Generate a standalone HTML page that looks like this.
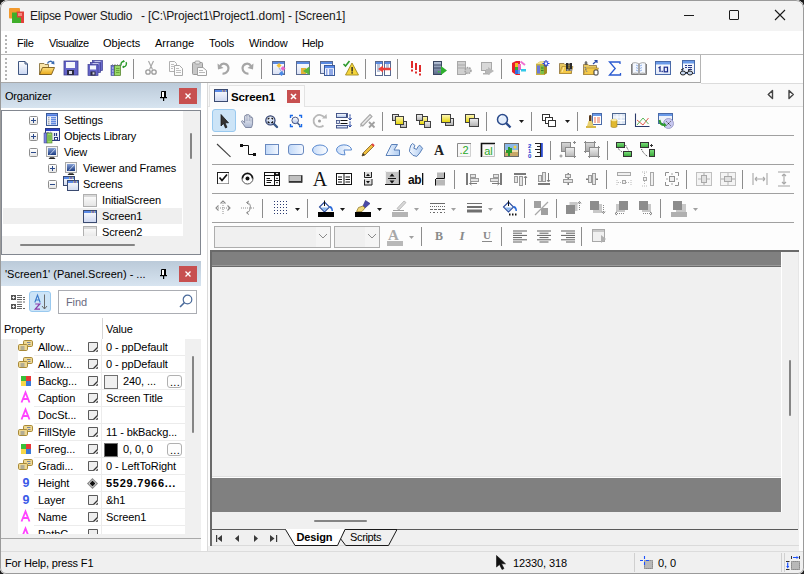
<!DOCTYPE html>
<html><head><meta charset="utf-8">
<style>
*{box-sizing:border-box;margin:0;padding:0}
html,body{width:804px;height:574px;overflow:hidden;background:#1c1c1c}
body{font-family:"Liberation Sans",sans-serif;font-size:11px;color:#000;position:relative}
.a{position:absolute}
svg.a{overflow:visible}
.t{position:absolute;white-space:nowrap;line-height:1}
#win{position:absolute;left:0;top:0;width:804px;height:574px;background:#f0f0f0;border-radius:8px 8px 6px 6px;overflow:hidden}
.mn{position:absolute;top:38px;white-space:nowrap;line-height:1;font-size:11px;letter-spacing:-0.45px;color:#000}
.tr{position:absolute;white-space:nowrap;line-height:1;font-size:11px;letter-spacing:-0.12px;color:#000}
.pr{position:absolute;white-space:nowrap;line-height:1;font-size:11px;letter-spacing:-0.1px;color:#000}
</style></head><body>
<div id="win">
<div class="a" style="left:0px;top:0px;width:804px;height:31px;background:#f3f3f3;"></div>
<svg class="a" style="left:9px;top:8px" width="15" height="15" viewBox="0 0 15 15"><rect x="0" y="0" width="11" height="10.5" rx="1" fill="#f29a2e"/><rect x="7.5" y="3.5" width="7.5" height="11.5" fill="#e2403a"/><path d="M3 4.5H8V9.5H12V15H3Z" fill="#3fae2a"/><path d="M9 5H13V8H9Z" fill="#f28a80"/></svg>
<div class="t" style="left:30px;top:10px;font-size:12px;letter-spacing:-0.28px;color:#1a1a1a">Elipse Power Studio</div>
<div class="t" style="left:141px;top:10px;font-size:12px;letter-spacing:-0.13px;color:#1a1a1a">- [C:\Project1\Project1.dom] - [Screen1]</div>
<div class="a" style="left:684px;top:15px;width:10px;height:1px;background:#1a1a1a;"></div>
<div class="a" style="left:729px;top:10px;width:10px;height:10px;background:transparent;border:1px solid #1a1a1a;border-radius:1px"></div>
<svg class="a" style="left:774px;top:9px" width="12" height="12" viewBox="0 0 12 12"><path d="M1 1L11 11M11 1L1 11" stroke="#1a1a1a" stroke-width="1.1"/></svg>
<div class="a" style="left:0px;top:31px;width:804px;height:23px;background:#fff;"></div>
<div class="a" style="left:0px;top:54px;width:804px;height:1px;background:#b8b8b8;"></div>
<div class="a" style="left:5px;top:35px;width:2px;height:2px;background:#b4b4b4;"></div>
<div class="a" style="left:5px;top:39px;width:2px;height:2px;background:#b4b4b4;"></div>
<div class="a" style="left:5px;top:43px;width:2px;height:2px;background:#b4b4b4;"></div>
<div class="a" style="left:5px;top:47px;width:2px;height:2px;background:#b4b4b4;"></div>
<div class="a" style="left:5px;top:51px;width:2px;height:2px;background:#b4b4b4;"></div>
<div class="mn" style="left:17px;top:38px;letter-spacing:-0.3px">File</div>
<div class="mn" style="left:49px;top:38px;letter-spacing:-0.45px">Visualize</div>
<div class="mn" style="left:103px;top:38px;letter-spacing:0px">Objects</div>
<div class="mn" style="left:155px;top:38px;letter-spacing:0px">Arrange</div>
<div class="mn" style="left:209px;top:38px;letter-spacing:-0.1px">Tools</div>
<div class="mn" style="left:249px;top:38px;letter-spacing:-0.1px">Window</div>
<div class="mn" style="left:302px;top:38px;letter-spacing:-0.35px">Help</div>
<div class="a" style="left:0px;top:55px;width:804px;height:28px;background:#fff;"></div>
<div class="a" style="left:0px;top:55px;width:701px;height:28px;background:#fdfdfd;border-right:1px solid #b4b4b4;border-bottom:1px solid #a8a8a8"></div>
<div class="a" style="left:5px;top:58px;width:2px;height:2px;background:#b4b4b4;"></div>
<div class="a" style="left:5px;top:62px;width:2px;height:2px;background:#b4b4b4;"></div>
<div class="a" style="left:5px;top:66px;width:2px;height:2px;background:#b4b4b4;"></div>
<div class="a" style="left:5px;top:70px;width:2px;height:2px;background:#b4b4b4;"></div>
<div class="a" style="left:5px;top:74px;width:2px;height:2px;background:#b4b4b4;"></div>
<div class="a" style="left:5px;top:78px;width:2px;height:2px;background:#b4b4b4;"></div>
<div class="a" style="left:133px;top:59px;width:1px;height:20px;background:#8c8c8c;"></div>
<div class="a" style="left:261px;top:59px;width:1px;height:20px;background:#8c8c8c;"></div>
<div class="a" style="left:365px;top:59px;width:1px;height:20px;background:#8c8c8c;"></div>
<div class="a" style="left:397px;top:59px;width:1px;height:20px;background:#8c8c8c;"></div>
<div class="a" style="left:501px;top:59px;width:1px;height:20px;background:#8c8c8c;"></div>
<svg class="a" style="left:15px;top:60px" width="16" height="16" viewBox="0 0 16 16"><defs><linearGradient id="gnew" x1="0" y1="0" x2="0" y2="1"><stop offset="0" stop-color="#ffffff"/><stop offset="1" stop-color="#c9d6f2"/></linearGradient></defs><path d="M3.5 1.5H10L12.5 4V14.5H3.5Z" fill="url(#gnew)" stroke="#3f5680" stroke-width="1"/><path d="M10 1.5V4H12.5" fill="none" stroke="#3f5680" stroke-width="1"/></svg>
<svg class="a" style="left:39px;top:60px" width="16" height="16" viewBox="0 0 16 16"><defs><linearGradient id="gopf" x1="0" y1="0" x2="0" y2="1"><stop offset="0" stop-color="#fce080"/><stop offset="1" stop-color="#e8a818"/></linearGradient></defs><path d="M0.5 3.5H5L6 4.5H9.5V14.5H0.5Z" fill="#f8e4a8" stroke="#8a7440" stroke-width="0.9"/><path d="M0.5 14.5L3.5 7.5H15.5L12.5 14.5Z" fill="url(#gopf)" stroke="#7a5a18" stroke-width="0.9"/><path d="M8.5 3.5C9.5 1 12.5 0.5 13.8 2.8" fill="none" stroke="#3a6ab0" stroke-width="1.4"/><path d="M12 3.5L15.5 4.5L15 0.8Z" fill="#3a6ab0"/></svg>
<svg class="a" style="left:63px;top:60px" width="16" height="16" viewBox="0 0 16 16"><rect x="1" y="1" width="14" height="14" fill="#6464c8" stroke="#3c3c90" stroke-width="0.8"/><rect x="3" y="2" width="9" height="6" fill="#f4f6fc"/><rect x="4" y="10" width="7" height="5" fill="#2a2a40"/><rect x="6" y="11" width="3" height="3" fill="#d8d8e8"/></svg>
<svg class="a" style="left:87px;top:60px" width="16" height="16" viewBox="0 0 16 16"><rect x="5.5" y="0.5" width="10" height="10" fill="#6a6acc" stroke="#3c3c90" stroke-width="0.7"/><rect x="7.5" y="1.3" width="6" height="1.5" fill="#e8ecfa"/><rect x="3.5" y="2.5" width="10" height="10" fill="#6a6acc" stroke="#3c3c90" stroke-width="0.7"/><rect x="5.5" y="3.3" width="6" height="1.5" fill="#e8ecfa"/><rect x="1" y="4.5" width="10" height="11" fill="#6464c8" stroke="#3c3c90" stroke-width="0.7"/><rect x="3" y="5.5" width="6" height="4" fill="#f4f6fc"/><rect x="3.5" y="11.5" width="5" height="4" fill="#2a2a40"/><rect x="5.5" y="12.3" width="2" height="2.2" fill="#d0d0e0"/></svg>
<svg class="a" style="left:111px;top:60px" width="16" height="16" viewBox="0 0 16 16"><rect x="0" y="5.5" width="3.5" height="10" fill="#6a74d0" stroke="#3a4490" stroke-width="0.6"/><rect x="1" y="7.5" width="1.5" height="1" fill="#dde"/><rect x="1" y="10.5" width="1.5" height="1" fill="#dde"/><rect x="1" y="13.5" width="1.5" height="1" fill="#dde"/><rect x="3.5" y="5.5" width="6" height="10" fill="#98d868" stroke="#4a7a20" stroke-width="0.7"/><path d="M5 8.5H8.5M5 10.5H8.5M5 12.5H8.5" stroke="#5a9a30" stroke-width="0.8"/><path d="M0.5 5.5Q1.5 3.8 2.5 5.5M3 5.5Q4 3.8 5 5.5M5.5 5.5Q6.5 3.8 7.5 5.5M8 5.5Q9 3.8 10 5.5" stroke="#505070" stroke-width="0.7" fill="none"/><path d="M10.2 5.5A3.2 3.2 0 0 1 12.5 1.2" stroke="#2a9a2a" stroke-width="1.4" fill="none"/><path d="M12 0L14.2 1.2L12 2.6Z" fill="#2a9a2a"/><path d="M15 2.2A3.2 3.2 0 0 1 12.5 7" stroke="#2a9a2a" stroke-width="1.4" fill="none"/><path d="M13 5.6L10.8 6.9L13 8.3Z" fill="#2a9a2a"/></svg>
<svg class="a" style="left:143px;top:60px" width="16" height="16" viewBox="0 0 16 16"><path d="M5.5 1L9.5 9.5M10.5 1L6.5 9.5" stroke="#a8a8a8" stroke-width="1.2"/><circle cx="5" cy="12" r="2.2" fill="none" stroke="#9a9a9a" stroke-width="1.3"/><circle cx="11" cy="12" r="2.2" fill="none" stroke="#9a9a9a" stroke-width="1.3"/></svg>
<svg class="a" style="left:168px;top:60px" width="16" height="16" viewBox="0 0 16 16"><path d="M1.5 1.5H6.5L8.5 3.5V11.5H1.5Z" fill="#fcfcfc" stroke="#b0b0b0"/><path d="M6.5 5.5H11.5L14.5 8.5V15.5H6.5Z" fill="#fcfcfc" stroke="#a8a8a8"/><path d="M3 4.5H6M3 6.5H7M3 8.5H5M8 8.5H11M8 10.5H13M8 12.5H13" stroke="#b8b8b8" stroke-width="0.9"/></svg>
<svg class="a" style="left:191px;top:60px" width="16" height="16" viewBox="0 0 16 16"><rect x="1.5" y="2.5" width="10" height="12" rx="1" fill="#c8c8c8" stroke="#989898"/><rect x="4" y="1" width="5" height="3" rx="1" fill="#e8e8e8" stroke="#989898" stroke-width="0.8"/><path d="M6.5 7.5H12L15.5 10.5V15.5H6.5Z" fill="#fcfcfc" stroke="#a0a0a0"/><path d="M8 10.5H12M8 12.5H14" stroke="#b0b0b0" stroke-width="0.9"/></svg>
<svg class="a" style="left:216px;top:60px" width="16" height="16" viewBox="0 0 16 16"><path d="M4 6C6 2.5 12 3 12.5 8C12.5 12 9 14 6.5 13.5" fill="none" stroke="#a6a6a6" stroke-width="2.2"/><path d="M1.5 3.5L2 9.5L7.5 8Z" fill="#a6a6a6"/></svg>
<svg class="a" style="left:239px;top:60px" width="16" height="16" viewBox="0 0 16 16"><path d="M12 6C10 2.5 4 3 3.5 8C3.5 12 7 14 9.5 13.5" fill="none" stroke="#a6a6a6" stroke-width="2.2"/><path d="M14.5 3.5L14 9.5L8.5 8Z" fill="#a6a6a6"/></svg>
<svg class="a" style="left:271px;top:60px" width="16" height="16" viewBox="0 0 16 16"><defs><linearGradient id="gwd" x1="0" y1="0" x2="0" y2="1"><stop offset="0" stop-color="#fff"/><stop offset="1" stop-color="#d8e0f4"/></linearGradient></defs><rect x="1.5" y="1.5" width="12" height="13" fill="url(#gwd)" stroke="#5a6a90" stroke-width="1"/><rect x="2" y="2" width="11" height="2" fill="#5a8ae0"/><path d="M8 3L10.5 5.5L8 8L5.5 5.5Z" fill="#f4c23a"/><path d="M12 6L14.5 8.5L12 11L9.5 8.5Z" fill="#e86ac8"/><path d="M10.5 11L13 13.5L10.5 16L8 13.5Z" fill="#4a8ae8"/><path d="M8 8L10 11M12 11L11 12" stroke="#6080c0" stroke-width="0.6"/></svg>
<svg class="a" style="left:295px;top:60px" width="16" height="16" viewBox="0 0 16 16"><defs><linearGradient id="gwa" x1="0" y1="0" x2="0" y2="1"><stop offset="0" stop-color="#fff"/><stop offset="1" stop-color="#d8e0f4"/></linearGradient></defs><rect x="1.5" y="1.5" width="13" height="13" fill="url(#gwa)" stroke="#5a6a90" stroke-width="1"/><rect x="2" y="2" width="12" height="2" fill="#5a8ae0"/><rect x="6" y="8" width="5" height="6" fill="#e2b23a"/><path d="M8 11L14.5 6.5V15Z" fill="#58b83a"/></svg>
<svg class="a" style="left:319px;top:60px" width="16" height="16" viewBox="0 0 16 16"><defs><linearGradient id="gwt" x1="0" y1="0" x2="0" y2="1"><stop offset="0" stop-color="#fff"/><stop offset="1" stop-color="#d8e0f4"/></linearGradient></defs><rect x="1.5" y="1.5" width="12" height="12" fill="url(#gwt)" stroke="#5a6a90" stroke-width="1"/><rect x="2" y="2" width="11" height="2" fill="#5a8ae0"/><rect x="5.5" y="5.5" width="10" height="10" fill="#f4f6fc" stroke="#3a5a9a"/><rect x="6" y="6" width="9" height="2.2" fill="#5a8ae8"/><path d="M7 10H8.5M10 10H14M7 12H8.5M10 12H14M7 14H8.5M10 14H14" stroke="#2a5ad0" stroke-width="1"/></svg>
<svg class="a" style="left:343px;top:60px" width="16" height="16" viewBox="0 0 16 16"><path d="M0.5 4L2.5 6L6.5 1" fill="none" stroke="#2e9a2e" stroke-width="1.6"/><path d="M9 3L15.5 15H2.5Z" fill="#f4d43a" stroke="#a08a20" stroke-width="0.9"/><rect x="8.4" y="7" width="1.4" height="4.5" fill="#222"/><rect x="8.4" y="12.2" width="1.4" height="1.4" fill="#222"/></svg>
<svg class="a" style="left:375px;top:60px" width="16" height="16" viewBox="0 0 16 16"><rect x="0.5" y="1.5" width="7" height="14" fill="#fff" stroke="#5a6a90" stroke-width="1"/><rect x="1" y="2" width="6" height="2" fill="#5a8ae0"/><rect x="9.5" y="1.5" width="6" height="14" fill="#fff" stroke="#5a6a90" stroke-width="1"/><rect x="10" y="2" width="5" height="2" fill="#5a8ae0"/><path d="M2 5H5M2 7H5M2 9H5M2 11H5M11 5H14M11 7H14" stroke="#3a5a9a" stroke-width="0.7"/><path d="M3 9L8 5.5V7.8H16V10.2H8V12.5Z" fill="#e8403a"/></svg>
<svg class="a" style="left:408px;top:60px" width="16" height="16" viewBox="0 0 16 16"><rect x="3" y="1" width="2" height="7" fill="#e02a2a"/><rect x="3" y="9.5" width="2" height="2" fill="#e02a2a"/><rect x="7" y="3" width="2" height="7" fill="#e02a2a"/><rect x="7" y="11.5" width="2" height="2" fill="#e02a2a"/><rect x="11" y="5" width="2" height="7" fill="#e02a2a"/><rect x="11" y="13.5" width="2" height="2" fill="#e02a2a"/></svg>
<svg class="a" style="left:432px;top:60px" width="16" height="16" viewBox="0 0 16 16"><defs><linearGradient id="gsp" x1="0" y1="0" x2="0" y2="1"><stop offset="0" stop-color="#b8c4d8"/><stop offset="1" stop-color="#5a6a88"/></linearGradient></defs><rect x="1.5" y="1.5" width="8" height="13" fill="url(#gsp)" stroke="#3a4660"/><path d="M2 5H9M2 8H9" stroke="#2a3450" stroke-width="0.8"/><rect x="6" y="11" width="1.5" height="1.5" fill="#3ac83a"/><path d="M9 6L15 10.5L9 15Z" fill="#2eb02e"/></svg>
<svg class="a" style="left:456px;top:60px" width="16" height="16" viewBox="0 0 16 16"><rect x="1.5" y="1.5" width="8" height="13" fill="#d0d0d0" stroke="#a8a8a8"/><path d="M2 5H9M2 8H9" stroke="#a0a0a0" stroke-width="0.8"/><circle cx="12" cy="10.5" r="3" fill="#c8c8c8" stroke="#a0a0a0" stroke-width="1.5" stroke-dasharray="1.5 1"/></svg>
<svg class="a" style="left:480px;top:60px" width="16" height="16" viewBox="0 0 16 16"><rect x="1.5" y="2.5" width="10" height="8" fill="#d8d8d8" stroke="#a8a8a8"/><rect x="5" y="11" width="3" height="2" fill="#b0b0b0"/><rect x="3" y="13" width="7" height="1.5" fill="#b0b0b0"/><path d="M8 7L14 11L8 15Z" fill="#b8b8b8"/><rect x="6" y="9" width="3" height="4" fill="#b8b8b8"/></svg>
<svg class="a" style="left:511px;top:60px" width="16" height="16" viewBox="0 0 16 16"><path d="M1 3L5 1H9L9 15L5 15L1 12Z" fill="#e8202a"/><rect x="4" y="3" width="3" height="4" fill="#f4c020"/><rect x="7" y="4" width="3" height="3" fill="#f070c0"/><rect x="4" y="7" width="3" height="3" fill="#30b030"/><rect x="7" y="7" width="3" height="3" fill="#e860c8"/><rect x="4" y="10" width="3" height="4" fill="#3070e0"/><rect x="7" y="10" width="2" height="4" fill="#5aa0f0"/><path d="M9.5 1.5L14 5" stroke="#f070d0" stroke-width="2"/><rect x="10" y="9" width="5" height="2.5" fill="#30c8e8"/></svg>
<svg class="a" style="left:535px;top:60px" width="16" height="16" viewBox="0 0 16 16"><path d="M1 4L5 1.5H12L12 13L9 15H1Z" fill="#c8b040"/><path d="M1 4L5 1.5H12L9 4Z" fill="#f0e090"/><path d="M9 4L12 1.5V13L9 15Z" fill="#a08a20"/><rect x="2" y="5.5" width="3" height="8" fill="#6a78d8"/><rect x="5.5" y="5.5" width="3.5" height="8.5" fill="#78c048"/><path d="M6 8H8.5M6 10.5H8.5" stroke="#3a6a20" stroke-width="0.8"/><path d="M11 0V7M7.5 3.5H14.5M8.8 1.3L13.2 5.7M13.2 1.3L8.8 5.7" stroke="#1a3ae8" stroke-width="1.1"/><circle cx="11" cy="3.5" r="1.2" fill="#fff"/></svg>
<svg class="a" style="left:559px;top:60px" width="16" height="16" viewBox="0 0 16 16"><path d="M0.5 3.5H5L6 4.5H12.5V13.5H0.5Z" fill="#e8c860" stroke="#8a7040" stroke-width="0.8"/><path d="M0.5 13.5L3 6.5H14L12 13.5Z" fill="#f4c848" stroke="#a08030" stroke-width="0.6"/><path d="M3 12L5 7" stroke="#fff0c0" stroke-width="0.8"/><path d="M7 3H9.5V8.5H10.5V3H13V11H10.5V9.5H9.5V11H7Z" fill="#2a2a2a"/><rect x="7.5" y="9" width="2" height="2" fill="#909090"/><rect x="11" y="9" width="2" height="2" fill="#909090"/></svg>
<svg class="a" style="left:583px;top:60px" width="16" height="16" viewBox="0 0 16 16"><path d="M0.5 4.5H5L6 5.5H13.5V14.5H0.5Z" fill="#e8c860" stroke="#8a7040" stroke-width="0.8"/><path d="M0.5 14.5L3 8H15.5L13 14.5Z" fill="#f4c848" stroke="#a08030" stroke-width="0.6"/><path d="M3 1V5M1.5 3H4.5" stroke="#404040" stroke-width="1"/><path d="M2 7L4 12" stroke="#3a5aa8" stroke-width="1" stroke-dasharray="1 1"/><path d="M10 4L14 0.5M11.5 0.5H14V3" stroke="#2a4aa8" stroke-width="1.2" fill="none"/><rect x="11" y="10" width="4" height="5" rx="1" fill="#fff" stroke="#333" stroke-width="1"/></svg>
<svg class="a" style="left:607px;top:60px" width="16" height="16" viewBox="0 0 16 16"><path d="M13 4V2H2.5L8.2 8.5L2.5 15H13.5V13" fill="none" stroke="#2a5ad0" stroke-width="1.3"/></svg>
<svg class="a" style="left:631px;top:60px" width="16" height="16" viewBox="0 0 16 16"><path d="M0.5 4V14.5H7.5L8 15L8.5 14.5H15.5V4" fill="#e0e0e0" stroke="#707070" stroke-width="0.9"/><path d="M1.5 3Q4.5 2 7.5 3.5V13.5Q4.5 12.5 1.5 13.5Z" fill="#f4f8ff" stroke="#8a8a8a" stroke-width="0.7"/><path d="M14.5 3Q11.5 2 8.5 3.5V13.5Q11.5 12.5 14.5 13.5Z" fill="#f4f8ff" stroke="#8a8a8a" stroke-width="0.7"/><path d="M5 5L7 6M5 7.5L7 8.5M5 10L7 11M9 6L11 5M9 8.5L11 7.5M9 11L11 10" stroke="#7aa0e0" stroke-width="0.8"/></svg>
<svg class="a" style="left:655px;top:61px" width="16" height="16" viewBox="0 0 16 16"><defs><linearGradient id="gw10" x1="0" y1="0" x2="0" y2="1"><stop offset="0" stop-color="#fff"/><stop offset="1" stop-color="#e0e8f8"/></linearGradient></defs><rect x="0.5" y="0.5" width="15" height="13" fill="url(#gw10)" stroke="#4a6aa8"/><rect x="1" y="1" width="14" height="2.5" fill="#6a9ae8"/><path d="M3.5 7L5 6V11" stroke="#1a2a8a" stroke-width="1.3" fill="none"/><rect x="6.5" y="9.8" width="1.3" height="1.3" fill="#1a2a8a"/><rect x="9.2" y="6.2" width="3.3" height="4.6" fill="none" stroke="#1a2a8a" stroke-width="1.2"/></svg>
<svg class="a" style="left:679px;top:60px" width="16" height="16" viewBox="0 0 16 16"><defs><linearGradient id="gwg" x1="0" y1="0" x2="0" y2="1"><stop offset="0" stop-color="#fff"/><stop offset="1" stop-color="#e0e8f8"/></linearGradient></defs><rect x="3.5" y="0.5" width="12" height="13" fill="url(#gwg)" stroke="#4a6aa8"/><rect x="4" y="1" width="11" height="2.5" fill="#6a9ae8"/><path d="M6 5.5H8M9 5.5H13M6 7.5H8M9 7.5H13M9 9.5H13" stroke="#2a3a8a" stroke-width="1"/><path d="M2 10L5 8.5M7 12.5H9M9 11L11.5 9" stroke="#222" stroke-width="1"/><ellipse cx="4" cy="13" rx="2.6" ry="2" fill="#c8d8f0" stroke="#222" stroke-width="1"/><ellipse cx="11" cy="13" rx="2.6" ry="2" fill="#c8d8f0" stroke="#222" stroke-width="1"/></svg>
<div class="a" style="left:0px;top:83px;width:207px;height:468px;background:#fff;"></div>
<div class="a" style="left:0px;top:83px;width:201px;height:25px;background:linear-gradient(#bbcad9,#d7e4f0);"></div>
<div class="tr" style="left:5px;top:91px;letter-spacing:-0.2px">Organizer</div>
<svg class="a" style="left:160px;top:91px" width="8" height="10" viewBox="0 0 8 10"><path d="M1.5 0.5H5.5V6.5H1.5Z" fill="#fff" stroke="#000" stroke-width="1"/><rect x="4" y="0" width="2" height="7" fill="#000"/><rect x="0" y="6" width="7" height="1.2" fill="#000"/><rect x="3" y="7" width="1.2" height="3" fill="#000"/></svg>
<div class="a" style="left:179px;top:88px;width:18px;height:16px;background:#c75050;"></div>
<svg class="a" style="left:185px;top:93px" width="6" height="6" viewBox="0 0 6 6"><path d="M0.5 0.5L5.5 5.5M5.5 0.5L0.5 5.5" stroke="#fff" stroke-width="1.3"/></svg>
<div class="a" style="left:1px;top:110px;width:200px;height:145px;background:#fff;border:1px solid #828790"></div>
<div class="a" style="left:183px;top:111px;width:17px;height:125px;background:#f0f0f0;"></div>
<div class="a" style="left:190px;top:133px;width:2px;height:26px;background:#858585;border-radius:1px"></div>
<div class="a" style="left:2px;top:236px;width:198px;height:18px;background:#f0f0f0;"></div>
<div class="a" style="left:20px;top:244px;width:115px;height:2px;background:#858585;border-radius:1px"></div>
<div class="a" style="left:3px;top:208px;width:179px;height:16px;background:#efefef;"></div>
<div class="a" style="left:29px;top:116px;width:9px;height:9px;border:1px solid #8e8e8e;border-radius:1.5px;background:linear-gradient(#ffffff,#e6e6e6)"></div>
<div class="a" style="left:31px;top:120px;width:5px;height:1px;background:#2b4a8a;"></div>
<div class="a" style="left:33px;top:118px;width:1px;height:5px;background:#2b4a8a;"></div>
<div class="a" style="left:29px;top:132px;width:9px;height:9px;border:1px solid #8e8e8e;border-radius:1.5px;background:linear-gradient(#ffffff,#e6e6e6)"></div>
<div class="a" style="left:31px;top:136px;width:5px;height:1px;background:#2b4a8a;"></div>
<div class="a" style="left:33px;top:134px;width:1px;height:5px;background:#2b4a8a;"></div>
<div class="a" style="left:29px;top:148px;width:9px;height:9px;border:1px solid #8e8e8e;border-radius:1.5px;background:linear-gradient(#ffffff,#e6e6e6)"></div>
<div class="a" style="left:31px;top:152px;width:5px;height:1px;background:#2b4a8a;"></div>
<div class="a" style="left:48px;top:164px;width:9px;height:9px;border:1px solid #8e8e8e;border-radius:1.5px;background:linear-gradient(#ffffff,#e6e6e6)"></div>
<div class="a" style="left:50px;top:168px;width:5px;height:1px;background:#2b4a8a;"></div>
<div class="a" style="left:52px;top:166px;width:1px;height:5px;background:#2b4a8a;"></div>
<div class="a" style="left:48px;top:180px;width:9px;height:9px;border:1px solid #8e8e8e;border-radius:1.5px;background:linear-gradient(#ffffff,#e6e6e6)"></div>
<div class="a" style="left:50px;top:184px;width:5px;height:1px;background:#2b4a8a;"></div>
<svg class="a" style="left:46px;top:113px" width="16" height="16" viewBox="0 0 16 16"><defs><linearGradient id="gset" x1="0" y1="0" x2="0" y2="1"><stop offset="0" stop-color="#ffffff"/><stop offset="1" stop-color="#dfe6f4"/></linearGradient></defs><defs><linearGradient id="gsett" x1="0" y1="0" x2="0" y2="1"><stop offset="0" stop-color="#7aa0f0"/><stop offset="1" stop-color="#3a6ad8"/></linearGradient></defs><rect x="0.5" y="0.5" width="11" height="12" fill="url(#gset)" stroke="#3a5a98"/><rect x="1" y="1" width="10" height="2.2" fill="url(#gsett)"/><path d="M2 4.8H3.5M2 6.8H3.5M2 8.8H3.5M2 10.8H3.5" stroke="#909090" stroke-width="1"/><path d="M5 4.8H10M5 6.8H10M5 8.8H10M5 10.8H10" stroke="#2a60d8" stroke-width="1"/></svg>
<svg class="a" style="left:44px;top:128px" width="16" height="16" viewBox="0 0 16 16"><defs><linearGradient id="gobl" x1="0" y1="0" x2="0" y2="1"><stop offset="0" stop-color="#ffffff"/><stop offset="1" stop-color="#dfe6f4"/></linearGradient></defs><rect x="1.5" y="0.5" width="14" height="12" fill="url(#gobl)" stroke="#2a3a80"/><rect x="2" y="1" width="13" height="2" fill="#2a40c8"/><path d="M10.5 5V8M12.5 5V8" stroke="#2a3a80" stroke-width="1.2"/><rect x="10.5" y="9.5" width="3" height="2.5" fill="#fff" stroke="#2a3a80" stroke-width="1"/><rect x="0" y="5" width="3" height="10" fill="#7a80e0" stroke="#3a4090" stroke-width="0.5"/><rect x="3" y="5" width="5" height="10" fill="#98d868" stroke="#4a7a20" stroke-width="0.6"/><path d="M4 8H7M4 10H7M4 12H7" stroke="#4a8a30" stroke-width="0.7"/><path d="M0.5 5Q1.5 3.5 2.5 5M3 5Q4 3.5 5 5M5.5 5Q6.5 3.5 7.5 5" stroke="#505070" stroke-width="0.6" fill="none"/></svg>
<svg class="a" style="left:45px;top:145px" width="16" height="16" viewBox="0 0 16 16"><defs><linearGradient id="gmon" x1="0" y1="0" x2="0" y2="1"><stop offset="0" stop-color="#8aa4d8"/><stop offset="1" stop-color="#1a3a80"/></linearGradient></defs><rect x="1.5" y="1.5" width="11" height="10" fill="#f4f4f4" stroke="#a8a8a8"/><rect x="3" y="3" width="8" height="7" fill="url(#gmon)"/><path d="M5 9.5L10.5 3.5" stroke="#dde6f8" stroke-width="0.8"/><path d="M3.5 14H10.5L9 12.2H5Z" fill="#222"/></svg>
<svg class="a" style="left:64px;top:161px" width="16" height="16" viewBox="0 0 16 16"><defs><linearGradient id="gmon" x1="0" y1="0" x2="0" y2="1"><stop offset="0" stop-color="#8aa4d8"/><stop offset="1" stop-color="#1a3a80"/></linearGradient></defs><rect x="1.5" y="1.5" width="11" height="10" fill="#f4f4f4" stroke="#a8a8a8"/><rect x="3" y="3" width="8" height="7" fill="url(#gmon)"/><path d="M5 9.5L10.5 3.5" stroke="#dde6f8" stroke-width="0.8"/><path d="M3.5 14H10.5L9 12.2H5Z" fill="#222"/></svg>
<svg class="a" style="left:63px;top:176px" width="16" height="16" viewBox="0 0 16 16"><defs><linearGradient id="gscs" x1="0" y1="0" x2="0" y2="1"><stop offset="0" stop-color="#ffffff"/><stop offset="1" stop-color="#d0daf0"/></linearGradient></defs><rect x="0.5" y="0.5" width="11" height="9" fill="url(#gscs)" stroke="#3a4a70"/><rect x="1" y="1" width="10" height="2" fill="#5a8ae8"/><rect x="6" y="1.5" width="1" height="1" fill="#f4d040"/><rect x="7.5" y="1.5" width="1" height="1" fill="#e03030"/><rect x="9" y="1.5" width="1" height="1" fill="#f4d040"/><rect x="4.5" y="4.5" width="11" height="10" fill="url(#gscs)" stroke="#3a4a70"/><rect x="5" y="5" width="10" height="2" fill="#5a8ae8"/><rect x="10" y="5.5" width="1" height="1" fill="#f4d040"/><rect x="11.5" y="5.5" width="1" height="1" fill="#e03030"/><rect x="13" y="5.5" width="1" height="1" fill="#f4d040"/></svg>
<svg class="a" style="left:83px;top:194px" width="16" height="16" viewBox="0 0 16 16"><defs><linearGradient id="gscg" x1="0" y1="0" x2="0" y2="1"><stop offset="0" stop-color="#ffffff"/><stop offset="1" stop-color="#e4e4e4"/></linearGradient></defs><rect x="0.5" y="0.5" width="13" height="12" fill="url(#gscg)" stroke="#b0b0b0"/><rect x="1" y="1" width="12" height="2" fill="#d8d8d8"/></svg>
<svg class="a" style="left:83px;top:210px" width="16" height="16" viewBox="0 0 16 16"><defs><linearGradient id="gscr" x1="0" y1="0" x2="0" y2="1"><stop offset="0" stop-color="#ffffff"/><stop offset="1" stop-color="#ccd6f0"/></linearGradient></defs><rect x="0.5" y="0.5" width="13" height="12" fill="url(#gscr)" stroke="#3a4a70"/><rect x="1" y="1" width="12" height="2" fill="#5a8ae8"/><rect x="8" y="1.5" width="1" height="1" fill="#f4d040"/><rect x="9.5" y="1.5" width="1" height="1" fill="#e03030"/><rect x="11" y="1.5" width="1" height="1" fill="#f4d040"/></svg>
<div class="tr" style="left:64px;top:115px;">Settings</div>
<div class="tr" style="left:64px;top:131px;">Objects Library</div>
<div class="tr" style="left:64px;top:147px;">View</div>
<div class="tr" style="left:83px;top:163px;">Viewer and Frames</div>
<div class="tr" style="left:83px;top:179px;">Screens</div>
<div class="tr" style="left:102px;top:195px;">InitialScreen</div>
<div class="tr" style="left:102px;top:211px;">Screen1</div>
<div class="a" style="left:2px;top:224px;width:181px;height:12px;overflow:hidden">
<svg class="a" style="left:81px;top:2px" width="16" height="16" viewBox="0 0 16 16"><defs><linearGradient id="gscg" x1="0" y1="0" x2="0" y2="1"><stop offset="0" stop-color="#ffffff"/><stop offset="1" stop-color="#e4e4e4"/></linearGradient></defs><rect x="0.5" y="0.5" width="13" height="12" fill="url(#gscg)" stroke="#b0b0b0"/><rect x="1" y="1" width="12" height="2" fill="#d8d8d8"/></svg>
<div class="tr" style="left:100px;top:3px;">Screen2</div>
</div>
<div class="a" style="left:0px;top:261px;width:201px;height:25px;background:linear-gradient(#bbcad9,#d7e4f0);"></div>
<div class="tr" style="left:5px;top:269px;letter-spacing:0px">'Screen1' (Panel.Screen) - ...</div>
<svg class="a" style="left:160px;top:269px" width="8" height="10" viewBox="0 0 8 10"><path d="M1.5 0.5H5.5V6.5H1.5Z" fill="#fff" stroke="#000" stroke-width="1"/><rect x="4" y="0" width="2" height="7" fill="#000"/><rect x="0" y="6" width="7" height="1.2" fill="#000"/><rect x="3" y="7" width="1.2" height="3" fill="#000"/></svg>
<div class="a" style="left:179px;top:266px;width:18px;height:16px;background:#c75050;"></div>
<svg class="a" style="left:185px;top:271px" width="6" height="6" viewBox="0 0 6 6"><path d="M0.5 0.5L5.5 5.5M5.5 0.5L0.5 5.5" stroke="#fff" stroke-width="1.3"/></svg>
<div class="a" style="left:0px;top:286px;width:201px;height:53px;background:#fff;"></div>
<div class="a" style="left:0px;top:339px;width:201px;height:212px;background:#f0f0f0;"></div>
<svg class="a" style="left:11px;top:295px" width="14" height="14" viewBox="0 0 14 14"><rect x="0" y="0" width="5" height="5" fill="#555"/><path d="M1.2 2.5H3.8M2.5 1.2V3.8" stroke="#fff" stroke-width="1"/><rect x="0" y="9" width="5" height="5" fill="#555"/><path d="M1.2 11.5H3.8M2.5 10.2V12.8" stroke="#fff" stroke-width="1"/><path d="M6 0.5H11M6 2.5H11M6 4.5H11M6 7H11M6 9.5H11M6 11.5H11M6 13.5H11M12 2.5H14M12 4.5H14M12 7H14M12 13.5H14" stroke="#555" stroke-width="0.9"/></svg>
<div class="a" style="left:29px;top:291px;width:22px;height:21px;background:#cce4f7;border:1px solid #99c9ef;border-radius:3px"></div>
<svg class="a" style="left:33px;top:293px" width="16" height="17" viewBox="0 0 16 17"><path d="M1.8 9.5L4.5 2L7.2 9.5M2.8 7H6.2" fill="none" stroke="#3a78c8" stroke-width="1.1"/><path d="M2.2 11H6.8L2.2 16.2H7" fill="none" stroke="#8a3aa8" stroke-width="1.2"/><path d="M11.5 1.5V16M9 13L11.5 16L14 13" fill="none" stroke="#6a6a6a" stroke-width="1"/></svg>
<div class="a" style="left:58px;top:290px;width:139px;height:24px;background:#fff;border:1px solid #abadb3"></div>
<div class="tr" style="left:66px;top:297px;color:#6a6a80">Find</div>
<svg class="a" style="left:179px;top:294px" width="14" height="14" viewBox="0 0 14 14"><circle cx="8.5" cy="5.5" r="4.3" fill="none" stroke="#4a6a9a" stroke-width="1.2"/><path d="M5.5 8.5L1 13" stroke="#4a6a9a" stroke-width="1.6"/></svg>
<div class="pr" style="left:4px;top:324px;">Property</div>
<div class="pr" style="left:106px;top:324px;">Value</div>
<div class="a" style="left:102px;top:318px;width:1px;height:21px;background:#d5d5d5;"></div>
<div class="a" style="left:2px;top:339px;width:183px;height:195px;background:#fff;"></div>
<div class="a" style="left:2px;top:339px;width:16px;height:195px;background:#f0f0f0;"></div>
<div class="a" style="left:185px;top:339px;width:16px;height:195px;background:#f0f0f0;"></div>
<div class="a" style="left:192px;top:356px;width:2px;height:77px;background:#858585;border-radius:1px"></div>
<div class="a" style="left:0px;top:538px;width:201px;height:1px;background:#a9a9a9;"></div>
<div class="a" style="left:0;top:339px;width:185px;height:195px;overflow:hidden">
<svg class="a" style="left:18px;top:1px" width="15" height="15" viewBox="0 0 15 15"><rect x="5.5" y="0.5" width="9" height="6" rx="1.2" fill="#f0d890" stroke="#a88a3a"/><rect x="0.5" y="4.5" width="9" height="6" rx="1.2" fill="#f0d890" stroke="#a88a3a"/><path d="M2.5 7H6.5M2.5 9H6.5M9 2.5H12.5M10 4.5H12.5" stroke="#6a7a9a" stroke-width="0.9"/></svg>
<div class="pr" style="left:38px;top:3px;">Allow...</div>
<svg class="a" style="left:88px;top:3px" width="10" height="10" viewBox="0 0 10 10"><path d="M0.5 0.5H9.5V5.5L5.5 9.5H0.5Z" fill="#eeeeee" stroke="#5a5a5a" stroke-width="1"/><path d="M9.5 5.5L5.5 9.5" stroke="#333" stroke-width="1.3"/><path d="M9.8 7.5V9.8H7.5Z" fill="#333"/></svg>
<div class="a" style="left:101px;top:0px;width:1px;height:16px;background:#ececec;"></div>
<div class="pr" style="left:106px;top:3px;">0 - ppDefault</div>
<div class="a" style="left:34px;top:16px;width:151px;height:1px;background:#ececec;"></div>
<svg class="a" style="left:18px;top:18px" width="15" height="15" viewBox="0 0 15 15"><rect x="5.5" y="0.5" width="9" height="6" rx="1.2" fill="#f0d890" stroke="#a88a3a"/><rect x="0.5" y="4.5" width="9" height="6" rx="1.2" fill="#f0d890" stroke="#a88a3a"/><path d="M2.5 7H6.5M2.5 9H6.5M9 2.5H12.5M10 4.5H12.5" stroke="#6a7a9a" stroke-width="0.9"/></svg>
<div class="pr" style="left:38px;top:20px;">Allow...</div>
<svg class="a" style="left:88px;top:20px" width="10" height="10" viewBox="0 0 10 10"><path d="M0.5 0.5H9.5V5.5L5.5 9.5H0.5Z" fill="#eeeeee" stroke="#5a5a5a" stroke-width="1"/><path d="M9.5 5.5L5.5 9.5" stroke="#333" stroke-width="1.3"/><path d="M9.8 7.5V9.8H7.5Z" fill="#333"/></svg>
<div class="a" style="left:101px;top:17px;width:1px;height:16px;background:#ececec;"></div>
<div class="pr" style="left:106px;top:20px;">0 - ppDefault</div>
<div class="a" style="left:34px;top:33px;width:151px;height:1px;background:#ececec;"></div>
<svg class="a" style="left:18px;top:35px" width="15" height="15" viewBox="0 0 15 15"><rect x="3" y="2" width="5" height="5" fill="#38c038"/><rect x="8" y="2" width="5" height="5" fill="#e83838"/><rect x="3" y="7" width="5" height="5" fill="#f8d848"/><rect x="8" y="7" width="5" height="5" fill="#3a78d8"/></svg>
<div class="pr" style="left:38px;top:37px;">Backg...</div>
<svg class="a" style="left:88px;top:37px" width="10" height="10" viewBox="0 0 10 10"><path d="M0.5 0.5H9.5V5.5L5.5 9.5H0.5Z" fill="#eeeeee" stroke="#5a5a5a" stroke-width="1"/><path d="M9.5 5.5L5.5 9.5" stroke="#333" stroke-width="1.3"/><path d="M9.8 7.5V9.8H7.5Z" fill="#333"/></svg>
<div class="a" style="left:101px;top:34px;width:1px;height:16px;background:#ececec;"></div>
<div class="a" style="left:104px;top:36px;width:14px;height:14px;background:#f0f0f0;border:1px solid #707070"></div>
<div class="pr" style="left:123px;top:37px;">240, ...</div>
<div class="a" style="left:167px;top:36px;width:15px;height:13px;background:#fdfdfd;border:1px solid #b0b0b0;border-radius:3px"></div>
<div class="pr" style="left:170px;top:38px;letter-spacing:0.3px">...</div>
<div class="a" style="left:34px;top:50px;width:151px;height:1px;background:#ececec;"></div>
<svg class="a" style="left:18px;top:52px" width="15" height="15" viewBox="0 0 15 15"><path d="M3.5 11.5L7.5 1.5L11.5 11.5M5 8H10" fill="none" stroke="#ff44ff" stroke-width="1.8"/></svg>
<div class="pr" style="left:38px;top:54px;">Caption</div>
<svg class="a" style="left:88px;top:54px" width="10" height="10" viewBox="0 0 10 10"><path d="M0.5 0.5H9.5V5.5L5.5 9.5H0.5Z" fill="#eeeeee" stroke="#5a5a5a" stroke-width="1"/><path d="M9.5 5.5L5.5 9.5" stroke="#333" stroke-width="1.3"/><path d="M9.8 7.5V9.8H7.5Z" fill="#333"/></svg>
<div class="a" style="left:101px;top:51px;width:1px;height:16px;background:#ececec;"></div>
<div class="pr" style="left:106px;top:54px;">Screen Title</div>
<div class="a" style="left:34px;top:67px;width:151px;height:1px;background:#ececec;"></div>
<svg class="a" style="left:18px;top:69px" width="15" height="15" viewBox="0 0 15 15"><path d="M3.5 11.5L7.5 1.5L11.5 11.5M5 8H10" fill="none" stroke="#ff44ff" stroke-width="1.8"/></svg>
<div class="pr" style="left:38px;top:71px;">DocSt...</div>
<svg class="a" style="left:88px;top:71px" width="10" height="10" viewBox="0 0 10 10"><path d="M0.5 0.5H9.5V5.5L5.5 9.5H0.5Z" fill="#eeeeee" stroke="#5a5a5a" stroke-width="1"/><path d="M9.5 5.5L5.5 9.5" stroke="#333" stroke-width="1.3"/><path d="M9.8 7.5V9.8H7.5Z" fill="#333"/></svg>
<div class="a" style="left:101px;top:68px;width:1px;height:16px;background:#ececec;"></div>
<div class="pr" style="left:106px;top:71px;"></div>
<div class="a" style="left:34px;top:84px;width:151px;height:1px;background:#ececec;"></div>
<svg class="a" style="left:18px;top:86px" width="15" height="15" viewBox="0 0 15 15"><rect x="5.5" y="0.5" width="9" height="6" rx="1.2" fill="#f0d890" stroke="#a88a3a"/><rect x="0.5" y="4.5" width="9" height="6" rx="1.2" fill="#f0d890" stroke="#a88a3a"/><path d="M2.5 7H6.5M2.5 9H6.5M9 2.5H12.5M10 4.5H12.5" stroke="#6a7a9a" stroke-width="0.9"/></svg>
<div class="pr" style="left:38px;top:88px;">FillStyle</div>
<svg class="a" style="left:88px;top:88px" width="10" height="10" viewBox="0 0 10 10"><path d="M0.5 0.5H9.5V5.5L5.5 9.5H0.5Z" fill="#eeeeee" stroke="#5a5a5a" stroke-width="1"/><path d="M9.5 5.5L5.5 9.5" stroke="#333" stroke-width="1.3"/><path d="M9.8 7.5V9.8H7.5Z" fill="#333"/></svg>
<div class="a" style="left:101px;top:85px;width:1px;height:16px;background:#ececec;"></div>
<div class="pr" style="left:106px;top:88px;">11 - bkBackg...</div>
<div class="a" style="left:34px;top:101px;width:151px;height:1px;background:#ececec;"></div>
<svg class="a" style="left:18px;top:103px" width="15" height="15" viewBox="0 0 15 15"><rect x="3" y="2" width="5" height="5" fill="#38c038"/><rect x="8" y="2" width="5" height="5" fill="#e83838"/><rect x="3" y="7" width="5" height="5" fill="#f8d848"/><rect x="8" y="7" width="5" height="5" fill="#3a78d8"/></svg>
<div class="pr" style="left:38px;top:105px;">Foreg...</div>
<svg class="a" style="left:88px;top:105px" width="10" height="10" viewBox="0 0 10 10"><path d="M0.5 0.5H9.5V5.5L5.5 9.5H0.5Z" fill="#eeeeee" stroke="#5a5a5a" stroke-width="1"/><path d="M9.5 5.5L5.5 9.5" stroke="#333" stroke-width="1.3"/><path d="M9.8 7.5V9.8H7.5Z" fill="#333"/></svg>
<div class="a" style="left:101px;top:102px;width:1px;height:16px;background:#ececec;"></div>
<div class="a" style="left:104px;top:104px;width:14px;height:14px;background:#000;border:1px solid #707070"></div>
<div class="pr" style="left:123px;top:105px;">0, 0, 0</div>
<div class="a" style="left:167px;top:104px;width:15px;height:13px;background:#fdfdfd;border:1px solid #b0b0b0;border-radius:3px"></div>
<div class="pr" style="left:170px;top:106px;letter-spacing:0.3px">...</div>
<div class="a" style="left:34px;top:118px;width:151px;height:1px;background:#ececec;"></div>
<svg class="a" style="left:18px;top:120px" width="15" height="15" viewBox="0 0 15 15"><rect x="5.5" y="0.5" width="9" height="6" rx="1.2" fill="#f0d890" stroke="#a88a3a"/><rect x="0.5" y="4.5" width="9" height="6" rx="1.2" fill="#f0d890" stroke="#a88a3a"/><path d="M2.5 7H6.5M2.5 9H6.5M9 2.5H12.5M10 4.5H12.5" stroke="#6a7a9a" stroke-width="0.9"/></svg>
<div class="pr" style="left:38px;top:122px;">Gradi...</div>
<svg class="a" style="left:88px;top:122px" width="10" height="10" viewBox="0 0 10 10"><path d="M0.5 0.5H9.5V5.5L5.5 9.5H0.5Z" fill="#eeeeee" stroke="#5a5a5a" stroke-width="1"/><path d="M9.5 5.5L5.5 9.5" stroke="#333" stroke-width="1.3"/><path d="M9.8 7.5V9.8H7.5Z" fill="#333"/></svg>
<div class="a" style="left:101px;top:119px;width:1px;height:16px;background:#ececec;"></div>
<div class="pr" style="left:106px;top:122px;">0 - LeftToRight</div>
<div class="a" style="left:34px;top:135px;width:151px;height:1px;background:#ececec;"></div>
<svg class="a" style="left:18px;top:137px" width="15" height="15" viewBox="0 0 15 15"><text x="4.6" y="11" font-family="Liberation Sans" font-size="12.5" font-weight="bold" fill="#3a5ae8">9</text></svg>
<div class="pr" style="left:38px;top:139px;">Height</div>
<svg class="a" style="left:87px;top:139px" width="11" height="11" viewBox="0 0 11 11"><path d="M5.5 0.8L10.2 5.5L5.5 10.2L0.8 5.5Z" fill="#f4f4f4" stroke="#8a8a8a" stroke-width="1.2"/><path d="M5.5 2.6L8.4 5.5L5.5 8.4L2.6 5.5Z" fill="#111"/></svg>
<div class="a" style="left:101px;top:136px;width:1px;height:16px;background:#ececec;"></div>
<div class="pr" style="left:106px;top:139px;"><b style="letter-spacing:0.75px">5529.7966...</b></div>
<div class="a" style="left:34px;top:152px;width:151px;height:1px;background:#ececec;"></div>
<svg class="a" style="left:18px;top:154px" width="15" height="15" viewBox="0 0 15 15"><text x="4.6" y="11" font-family="Liberation Sans" font-size="12.5" font-weight="bold" fill="#3a5ae8">9</text></svg>
<div class="pr" style="left:38px;top:156px;">Layer</div>
<svg class="a" style="left:88px;top:156px" width="10" height="10" viewBox="0 0 10 10"><path d="M0.5 0.5H9.5V5.5L5.5 9.5H0.5Z" fill="#eeeeee" stroke="#5a5a5a" stroke-width="1"/><path d="M9.5 5.5L5.5 9.5" stroke="#333" stroke-width="1.3"/><path d="M9.8 7.5V9.8H7.5Z" fill="#333"/></svg>
<div class="a" style="left:101px;top:153px;width:1px;height:16px;background:#ececec;"></div>
<div class="pr" style="left:106px;top:156px;">&amp;h1</div>
<div class="a" style="left:34px;top:169px;width:151px;height:1px;background:#ececec;"></div>
<svg class="a" style="left:18px;top:171px" width="15" height="15" viewBox="0 0 15 15"><path d="M3.5 11.5L7.5 1.5L11.5 11.5M5 8H10" fill="none" stroke="#ff44ff" stroke-width="1.8"/></svg>
<div class="pr" style="left:38px;top:173px;">Name</div>
<svg class="a" style="left:88px;top:173px" width="10" height="10" viewBox="0 0 10 10"><path d="M0.5 0.5H9.5V5.5L5.5 9.5H0.5Z" fill="#eeeeee" stroke="#5a5a5a" stroke-width="1"/><path d="M9.5 5.5L5.5 9.5" stroke="#333" stroke-width="1.3"/><path d="M9.8 7.5V9.8H7.5Z" fill="#333"/></svg>
<div class="a" style="left:101px;top:170px;width:1px;height:16px;background:#ececec;"></div>
<div class="pr" style="left:106px;top:173px;">Screen1</div>
<div class="a" style="left:34px;top:186px;width:151px;height:1px;background:#ececec;"></div>
<svg class="a" style="left:18px;top:188px" width="15" height="15" viewBox="0 0 15 15"><path d="M3.5 11.5L7.5 1.5L11.5 11.5M5 8H10" fill="none" stroke="#ff44ff" stroke-width="1.8"/></svg>
<div class="pr" style="left:38px;top:190px;">PathC...</div>
<svg class="a" style="left:88px;top:190px" width="10" height="10" viewBox="0 0 10 10"><path d="M0.5 0.5H9.5V5.5L5.5 9.5H0.5Z" fill="#eeeeee" stroke="#5a5a5a" stroke-width="1"/><path d="M9.5 5.5L5.5 9.5" stroke="#333" stroke-width="1.3"/><path d="M9.8 7.5V9.8H7.5Z" fill="#333"/></svg>
<div class="a" style="left:101px;top:187px;width:1px;height:16px;background:#ececec;"></div>
<div class="pr" style="left:106px;top:190px;"></div>
</div>
<div class="a" style="left:201px;top:83px;width:6px;height:468px;background:#fff;"></div>
<div class="a" style="left:207px;top:83px;width:1px;height:468px;background:#dadada;"></div>
<div class="a" style="left:208px;top:83px;width:596px;height:468px;background:#fdfdfd;"></div>
<div class="a" style="left:208px;top:83px;width:596px;height:24px;background:#f9f9f9;"></div>
<div class="a" style="left:701px;top:83px;width:103px;height:1px;background:#dcdcdc;"></div>
<div class="a" style="left:208px;top:106px;width:595px;height:1px;background:#e3e3e3;"></div>
<div class="a" style="left:209px;top:85px;width:96px;height:22px;background:#fbfbfb;border:1px solid #e3e3e3;border-bottom:none"></div>
<svg class="a" style="left:214px;top:89px" width="16" height="16" viewBox="0 0 16 16"><defs><linearGradient id="gscr" x1="0" y1="0" x2="0" y2="1"><stop offset="0" stop-color="#ffffff"/><stop offset="1" stop-color="#ccd6f0"/></linearGradient></defs><rect x="0.5" y="0.5" width="13" height="12" fill="url(#gscr)" stroke="#3a4a70"/><rect x="1" y="1" width="12" height="2" fill="#5a8ae8"/><rect x="8" y="1.5" width="1" height="1" fill="#f4d040"/><rect x="9.5" y="1.5" width="1" height="1" fill="#e03030"/><rect x="11" y="1.5" width="1" height="1" fill="#f4d040"/></svg>
<div class="t" style="left:231px;top:92px;font-weight:bold;font-size:11.5px;letter-spacing:-0.1px">Screen1</div>
<div class="a" style="left:287px;top:90px;width:13px;height:13px;background:#c75050;"></div>
<svg class="a" style="left:290px;top:93px" width="7" height="7" viewBox="0 0 7 7"><path d="M1 1L6 6M6 1L1 6" stroke="#fff" stroke-width="1.6"/></svg>
<svg class="a" style="left:767px;top:89px" width="8" height="11" viewBox="0 0 8 11"><path d="M5.5 1.5L1.2 5.5L5.5 9.5Z" fill="none" stroke="#444" stroke-width="1.4" stroke-linejoin="round"/></svg>
<svg class="a" style="left:788px;top:89px" width="8" height="11" viewBox="0 0 8 11"><path d="M1 1.5L5.3 5.5L1 9.5Z" fill="none" stroke="#444" stroke-width="1.4" stroke-linejoin="round"/></svg>
<div class="a" style="left:212px;top:135px;width:582px;height:1px;background:#a0a0a0;"></div>
<div class="a" style="left:212px;top:164px;width:582px;height:1px;background:#a0a0a0;"></div>
<div class="a" style="left:212px;top:193px;width:582px;height:1px;background:#a0a0a0;"></div>
<div class="a" style="left:212px;top:222px;width:582px;height:1px;background:#a0a0a0;"></div>
<div class="a" style="left:212px;top:109px;width:24px;height:23px;background:#cce4f7;border:1px solid #99c9ef;border-radius:3px"></div>
<svg class="a" style="left:216px;top:113px" width="16" height="16" viewBox="0 0 16 16"><path d="M5 1.5V13L7.5 10.5L9.5 15L11 14.2L9 9.8H12.5Z" fill="#333" stroke="#111" stroke-width="0.7"/></svg>
<svg class="a" style="left:240px;top:113px" width="16" height="16" viewBox="0 0 16 16"><defs><linearGradient id="ghand" x1="0" y1="0" x2="0" y2="1"><stop offset="0" stop-color="#ffffff"/><stop offset="1" stop-color="#aab6d0"/></linearGradient></defs><path d="M5.5 14.5L3.2 11.2L1.6 8.8C1.2 7.9 2.4 7.2 3.2 8.1L4.6 9.6V3.2C4.6 2.2 6.2 2.2 6.2 3.2V2.1C6.2 1.1 7.8 1.1 7.8 2.1V2.3C7.8 1.4 9.4 1.4 9.4 2.4V3.5C9.4 2.6 11 2.6 11 3.6V5C11 4.2 12.6 4.2 12.6 5.1V10.2C12.6 12 12 13.2 11.4 14.5Z" fill="url(#ghand)" stroke="#6a7490" stroke-width="0.8"/><path d="M6.2 3V8M7.8 2.2V8M9.4 2.6V8M11 3.8V8.5" stroke="#8a94b0" stroke-width="0.6"/></svg>
<svg class="a" style="left:264px;top:113px" width="16" height="16" viewBox="0 0 16 16"><defs><linearGradient id="gzm" x1="0" y1="0" x2="0" y2="1"><stop offset="0" stop-color="#ffffff"/><stop offset="1" stop-color="#b0c4e8"/></linearGradient></defs><path d="M9.5 10.5L13 14" stroke="#3a5a8a" stroke-width="2.4" stroke-linecap="round"/><circle cx="6.4" cy="7.4" r="4.6" fill="url(#gzm)" stroke="#2a3a6a" stroke-width="1.2"/><path d="M4.2 6.6V5.2H5.6M7.2 5.2H8.6V6.6M8.6 8.2V9.6H7.2M5.6 9.6H4.2V8.2" stroke="#111" stroke-width="1.1" fill="none"/></svg>
<svg class="a" style="left:288px;top:113px" width="16" height="16" viewBox="0 0 16 16"><defs><linearGradient id="gzr" x1="0" y1="0" x2="0" y2="1"><stop offset="0" stop-color="#ffffff"/><stop offset="1" stop-color="#b0c4e8"/></linearGradient></defs><path d="M2.5 5V2.5H5M11 2.5H13.5V5M13.5 11V13.5H11M5 13.5H2.5V11" stroke="#1a6ae8" stroke-width="1.4" fill="none"/><path d="M9 9.5L11.5 12" stroke="#3a5a8a" stroke-width="1.6" stroke-linecap="round"/><circle cx="7.2" cy="7.4" r="3.3" fill="url(#gzr)" stroke="#3a4a7a" stroke-width="0.9"/></svg>
<svg class="a" style="left:312px;top:113px" width="16" height="16" viewBox="0 0 16 16"><path d="M12.5 4.5A6 6 0 1 0 11.5 12.5" fill="none" stroke="#b8b8b8" stroke-width="1.8"/><path d="M10 5.5H15L14.5 1Z" fill="#b8b8b8"/><circle cx="7.5" cy="8" r="1.5" fill="#a0a0a0"/></svg>
<svg class="a" style="left:336px;top:113px" width="16" height="16" viewBox="0 0 16 16"><defs><linearGradient id="glst" x1="0" y1="0" x2="0" y2="1"><stop offset="0" stop-color="#ffffff"/><stop offset="1" stop-color="#a8c0e8"/></linearGradient></defs><rect x="0.5" y="0.5" width="11" height="4" fill="url(#glst)" stroke="#3a4a80" stroke-width="0.9"/><rect x="10" y="1" width="1.2" height="3" fill="#3a4a80"/><rect x="0.5" y="7.5" width="3" height="3" fill="#dde6f4" stroke="#3a4a80" stroke-width="0.8"/><path d="M4.5 7.5H11.5M4.5 10.5H11.5" stroke="#111" stroke-width="1.2"/><rect x="0.5" y="12.5" width="11" height="2.5" fill="url(#glst)" stroke="#3a4a80" stroke-width="0.9"/><path d="M14 1.5V6.5M14 8.5V13.5" stroke="#1a3a9a" stroke-width="1.3" stroke-dasharray="1.2 0.8"/><path d="M12.5 5L14 7L15.5 5M12.5 12L14 14L15.5 12" stroke="#1a3a9a" stroke-width="1" fill="none"/></svg>
<svg class="a" style="left:360px;top:113px" width="16" height="16" viewBox="0 0 16 16"><path d="M0.8 11.2L10 1.5L12 3.5L2.8 13Z" fill="#e8e8e8" stroke="#a8a8a8" stroke-width="1.1"/><path d="M0.8 11.2L0 13.8L2.8 13Z" fill="#a8a8a8"/><path d="M9 9L14.5 14.5M14.5 9L9 14.5" stroke="#a0a0a0" stroke-width="1.8"/></svg>
<div class="a" style="left:382px;top:112px;width:1px;height:19px;background:#8c8c8c;"></div>
<svg class="a" style="left:392px;top:113px" width="16" height="16" viewBox="0 0 16 16"><defs><linearGradient id="gyb" x1="0" y1="0" x2="0" y2="1"><stop offset="0" stop-color="#fff8c0"/><stop offset="1" stop-color="#e4d400"/></linearGradient></defs><defs><linearGradient id="ggb" x1="0" y1="0" x2="0" y2="1"><stop offset="0" stop-color="#f0f0f0"/><stop offset="1" stop-color="#b0b0b0"/></linearGradient></defs><rect x="0.5" y="1.5" width="6" height="6" fill="url(#ggb)" stroke="#404040"/><rect x="8.5" y="8.5" width="6" height="6" fill="url(#ggb)" stroke="#404040"/><rect x="3.5" y="3.5" width="8" height="8" fill="url(#gyb)" stroke="#404040"/></svg>
<svg class="a" style="left:416px;top:113px" width="16" height="16" viewBox="0 0 16 16"><defs><linearGradient id="gys" x1="0" y1="0" x2="0" y2="1"><stop offset="0" stop-color="#fff8c0"/><stop offset="1" stop-color="#e4d400"/></linearGradient></defs><defs><linearGradient id="ggs" x1="0" y1="0" x2="0" y2="1"><stop offset="0" stop-color="#f0f0f0"/><stop offset="1" stop-color="#b0b0b0"/></linearGradient></defs><rect x="3.5" y="3.5" width="8" height="8" fill="url(#gys)" stroke="#404040"/><rect x="0.5" y="1.5" width="6" height="6" fill="url(#ggs)" stroke="#404040"/><rect x="8.5" y="8.5" width="6" height="6" fill="url(#ggs)" stroke="#404040"/></svg>
<svg class="a" style="left:440px;top:113px" width="16" height="16" viewBox="0 0 16 16"><defs><linearGradient id="gyf" x1="0" y1="0" x2="0" y2="1"><stop offset="0" stop-color="#fff8c0"/><stop offset="1" stop-color="#e4d400"/></linearGradient></defs><defs><linearGradient id="ggf" x1="0" y1="0" x2="0" y2="1"><stop offset="0" stop-color="#f0f0f0"/><stop offset="1" stop-color="#b0b0b0"/></linearGradient></defs><rect x="5.5" y="5.5" width="8" height="7" fill="url(#ggf)" stroke="#404040"/><rect x="1.5" y="1.5" width="9" height="8" fill="url(#gyf)" stroke="#404040"/></svg>
<svg class="a" style="left:464px;top:113px" width="16" height="16" viewBox="0 0 16 16"><defs><linearGradient id="gyk" x1="0" y1="0" x2="0" y2="1"><stop offset="0" stop-color="#fff8c0"/><stop offset="1" stop-color="#e4d400"/></linearGradient></defs><defs><linearGradient id="ggk" x1="0" y1="0" x2="0" y2="1"><stop offset="0" stop-color="#f0f0f0"/><stop offset="1" stop-color="#b0b0b0"/></linearGradient></defs><rect x="1.5" y="1.5" width="9" height="8" fill="url(#gyk)" stroke="#404040"/><rect x="5.5" y="5.5" width="9" height="8" fill="url(#ggk)" stroke="#404040"/></svg>
<div class="a" style="left:486px;top:112px;width:1px;height:19px;background:#8c8c8c;"></div>
<svg class="a" style="left:496px;top:113px" width="16" height="16" viewBox="0 0 16 16"><circle cx="6.5" cy="6.5" r="5" fill="#e4eefc" stroke="#2a4a8a" stroke-width="1.5"/><path d="M3.5 5A3 3 0 0 1 6 3" stroke="#fff" stroke-width="1" fill="none"/><path d="M10 10L14.5 14.5" stroke="#2a4a8a" stroke-width="2.4"/></svg>
<svg class="a" style="left:519px;top:120px" width="5" height="3" viewBox="0 0 5 3"><path d="M0 0H5L2.5 3Z" fill="#1a1a1a"/></svg>
<div class="a" style="left:531px;top:112px;width:1px;height:19px;background:#8c8c8c;"></div>
<svg class="a" style="left:541px;top:113px" width="16" height="16" viewBox="0 0 16 16"><rect x="1.5" y="1.5" width="7" height="6" fill="#fff" stroke="#333"/><rect x="4.5" y="4.5" width="7" height="6" fill="#fff" stroke="#333"/><rect x="7.5" y="7.5" width="7" height="6" fill="#fff" stroke="#333"/></svg>
<svg class="a" style="left:565px;top:120px" width="5" height="3" viewBox="0 0 5 3"><path d="M0 0H5L2.5 3Z" fill="#1a1a1a"/></svg>
<div class="a" style="left:577px;top:112px;width:1px;height:19px;background:#8c8c8c;"></div>
<svg class="a" style="left:586px;top:113px" width="16" height="16" viewBox="0 0 16 16"><rect x="6.5" y="0.5" width="9" height="11" fill="#fff" stroke="#4a6aa8"/><rect x="7" y="1" width="8" height="2" fill="#6a9ae8"/><path d="M8 5H10M11 5H14M8 7H10M11 7H14M8 9H10M11 9H14" stroke="#e85a3a" stroke-width="0.9"/><path d="M3 3.5C3 1.5 5.5 1.5 5.5 3.5V8H3Z" fill="#5a3a1a"/><path d="M2.5 8H6L7.5 13H1Z" fill="#e8d070"/><rect x="0" y="13" width="10" height="2" fill="#d8b848"/></svg>
<svg class="a" style="left:610px;top:113px" width="16" height="16" viewBox="0 0 16 16"><rect x="2.5" y="0.5" width="13" height="11" fill="#dce6f4" stroke="#506890"/><path d="M3 4H15M3 7.5H15M7 1V11M11 1V11" stroke="#fff" stroke-width="1"/><path d="M1 7V13.5C1 14.8 7 14.8 7 13.5V7Z" fill="#e0b830" stroke="#a08020" stroke-width="0.6"/><ellipse cx="4" cy="7" rx="3" ry="1.2" fill="#f8e8a0"/></svg>
<svg class="a" style="left:634px;top:113px" width="16" height="16" viewBox="0 0 16 16"><path d="M1.5 0.5V13.5H15.5" stroke="#2a3a6a" stroke-width="1.1" fill="none"/><path d="M3 7L9 12L14.5 5" stroke="#e04a3a" stroke-width="0.9" fill="none"/><path d="M3 12L9 5L14.5 11" stroke="#48b048" stroke-width="0.9" fill="none"/></svg>
<svg class="a" style="left:658px;top:113px" width="16" height="16" viewBox="0 0 16 16"><rect x="0.5" y="0.5" width="14" height="10" fill="#eef2fa" stroke="#4a6aa8"/><rect x="1" y="1" width="13" height="2" fill="#6a9ae8"/><circle cx="10.5" cy="10.5" r="5" fill="#c8c8f0" stroke="#9090c0" stroke-width="0.8"/><path d="M8.5 8.5L12.5 12.5M12.5 8.5L8.5 12.5" stroke="#222" stroke-width="1" stroke-dasharray="1.2 1"/><path d="M1.5 7C2 10 4 12 6 12" stroke="#2e9a2e" stroke-width="2" fill="none"/><path d="M6 9.5L8.5 12L6 14.5Z" fill="#2e9a2e"/></svg>
<svg class="a" style="left:215px;top:142px" width="16" height="16" viewBox="0 0 16 16"><path d="M2 2L15.5 14.8" stroke="#404040" stroke-width="1.1"/></svg>
<svg class="a" style="left:240px;top:142px" width="16" height="16" viewBox="0 0 16 16"><path d="M3 3.5H8.5V12.5H14" fill="none" stroke="#111" stroke-width="1"/><rect x="0" y="2" width="3" height="3" fill="#111"/><rect x="13" y="11" width="3" height="3" fill="#111"/></svg>
<svg class="a" style="left:264px;top:142px" width="16" height="16" viewBox="0 0 16 16"><defs><linearGradient id="grr" x1="0" y1="0" x2="1" y2="0"><stop offset="0" stop-color="#c0d8f8"/><stop offset="1" stop-color="#f4f8ff"/></linearGradient></defs><rect x="1.5" y="2.5" width="13" height="10" fill="url(#grr)" stroke="#6a8ac0"/></svg>
<svg class="a" style="left:288px;top:142px" width="16" height="16" viewBox="0 0 16 16"><defs><linearGradient id="grr2" x1="0" y1="0" x2="1" y2="0"><stop offset="0" stop-color="#c0d8f8"/><stop offset="1" stop-color="#f4f8ff"/></linearGradient></defs><rect x="0.5" y="2.5" width="15" height="10" rx="2.5" fill="url(#grr2)" stroke="#6a8ac0"/></svg>
<svg class="a" style="left:312px;top:142px" width="16" height="16" viewBox="0 0 16 16"><defs><linearGradient id="gre" x1="0" y1="0" x2="1" y2="0"><stop offset="0" stop-color="#c8dcf8"/><stop offset="1" stop-color="#ffffff"/></linearGradient></defs><ellipse cx="8" cy="8" rx="7.5" ry="5" fill="url(#gre)" stroke="#5a8ad0"/></svg>
<svg class="a" style="left:336px;top:142px" width="16" height="16" viewBox="0 0 16 16"><defs><linearGradient id="grp" x1="0" y1="0" x2="1" y2="0"><stop offset="0" stop-color="#c8dcf8"/><stop offset="1" stop-color="#ffffff"/></linearGradient></defs><path d="M8 8L15.5 8A7.5 5 0 1 0 9 12.8Z" fill="url(#grp)" stroke="#5a8ad0"/></svg>
<svg class="a" style="left:360px;top:142px" width="16" height="16" viewBox="0 0 16 16"><path d="M2 14L3 11L12 2L14 4L5 13Z" fill="#f0c040" stroke="#806020" stroke-width="0.8"/><path d="M12 2L14 4" stroke="#e04040" stroke-width="2"/><path d="M2 14L3 11L5 13Z" fill="#333"/></svg>
<svg class="a" style="left:385px;top:142px" width="16" height="16" viewBox="0 0 16 16"><defs><linearGradient id="grg" x1="0" y1="0" x2="1" y2="0"><stop offset="0" stop-color="#f0f6ff"/><stop offset="1" stop-color="#b0ccf0"/></linearGradient></defs><path d="M6.5 2.5H12.5L9 8H14.5V13.5H1Z" fill="url(#grg)" stroke="#5a80b8" stroke-linejoin="round"/></svg>
<svg class="a" style="left:408px;top:142px" width="16" height="16" viewBox="0 0 16 16"><defs><linearGradient id="grb" x1="0" y1="0" x2="1" y2="0"><stop offset="0" stop-color="#f0f6ff"/><stop offset="1" stop-color="#b0ccf0"/></linearGradient></defs><path d="M4.5 1.5L7 3.5L5.8 6.2L8.6 7.4L10 4.6L11.8 3.2L14.6 6.4L11.8 11L8.8 14.4L5 13.4L1.5 9.5L1.8 6.5L3 3Z" fill="url(#grb)" stroke="#5a80b8" stroke-linejoin="round"/></svg>
<svg class="a" style="left:431px;top:142px" width="16" height="16" viewBox="0 0 16 16"><text x="8" y="13" font-family="Liberation Serif" font-size="14" font-weight="bold" fill="#222" text-anchor="middle">A</text></svg>
<svg class="a" style="left:456px;top:142px" width="16" height="16" viewBox="0 0 16 16"><rect x="1" y="1" width="14" height="14" fill="#f8f8f8"/><path d="M1.5 15V1.5H15" stroke="#8a8a8a" fill="none"/><path d="M2 14.5H14.5V2" stroke="#d0d0d0" fill="none"/><text x="8" y="12" font-family="Liberation Sans" font-size="11" fill="#2aa82a" text-anchor="middle">.2</text></svg>
<svg class="a" style="left:480px;top:142px" width="16" height="16" viewBox="0 0 16 16"><rect x="1" y="1" width="14" height="14" fill="#f8f8f8"/><path d="M1.5 15V1.5H15" stroke="#111" stroke-width="1.6" fill="none"/><path d="M2.5 14.5H14.5V2.5" stroke="#c0c0c0" fill="none"/><text x="8.5" y="12.5" font-family="Liberation Sans" font-size="11" fill="#2aa82a" text-anchor="middle">al</text></svg>
<svg class="a" style="left:504px;top:142px" width="16" height="16" viewBox="0 0 16 16"><rect x="0.5" y="1.5" width="14" height="13" fill="#f0e0b0" stroke="#6a6a6a"/><rect x="1" y="2" width="13" height="6" fill="#8ab8e8"/><rect x="1" y="10" width="13" height="4" fill="#c8a868"/><path d="M5 14V5M3 8V10H7V6" stroke="#2a9a2a" stroke-width="2" fill="none"/><circle cx="11" cy="5" r="1.5" fill="#f4d040"/></svg>
<svg class="a" style="left:528px;top:142px" width="16" height="16" viewBox="0 0 16 16"><text x="0" y="5.5" font-family="Liberation Sans" font-size="6" font-weight="bold" fill="#1a3ad0">2</text><text x="0" y="10.5" font-family="Liberation Sans" font-size="6" font-weight="bold" fill="#1a3ad0">1</text><text x="0" y="15.5" font-family="Liberation Sans" font-size="6" font-weight="bold" fill="#1a3ad0">0</text><path d="M12.5 1V15M7 1.5H13M9 4.5H13M7 7.5H13M9 10.5H13M7 14.5H13" stroke="#222" stroke-width="1.1"/><rect x="13" y="1" width="1.8" height="14" fill="#2a4ad0"/></svg>
<div class="a" style="left:550px;top:141px;width:1px;height:19px;background:#8c8c8c;"></div>
<svg class="a" style="left:560px;top:142px" width="16" height="16" viewBox="0 0 16 16"><defs><linearGradient id="ggr" x1="0" y1="0" x2="0" y2="1"><stop offset="0" stop-color="#d8d8d8"/><stop offset="1" stop-color="#a8a8a8"/></linearGradient></defs><defs><linearGradient id="ggr2" x1="0" y1="0" x2="0" y2="1"><stop offset="0" stop-color="#f0f0f0"/><stop offset="1" stop-color="#b8b8b8"/></linearGradient></defs><rect x="1.5" y="0.5" width="9" height="9" fill="url(#ggr)" stroke="#8a8a8a"/><rect x="5.5" y="5.5" width="9" height="9" fill="url(#ggr2)" stroke="#8a8a8a"/><path d="M14.5 -1V2M13 0.5H16M1 12.5V15.5M-0.5 14H2.5M14.5 13V16M13 14.5H16" stroke="#8a8a8a" stroke-width="1"/></svg>
<svg class="a" style="left:584px;top:142px" width="16" height="16" viewBox="0 0 16 16"><defs><linearGradient id="ggu" x1="0" y1="0" x2="0" y2="1"><stop offset="0" stop-color="#d8d8d8"/><stop offset="1" stop-color="#a8a8a8"/></linearGradient></defs><defs><linearGradient id="ggu2" x1="0" y1="0" x2="0" y2="1"><stop offset="0" stop-color="#f0f0f0"/><stop offset="1" stop-color="#b8b8b8"/></linearGradient></defs><rect x="1.5" y="0.5" width="9" height="9" fill="url(#ggu)" stroke="#8a8a8a"/><rect x="5.5" y="5.5" width="9" height="9" fill="url(#ggu2)" stroke="#8a8a8a"/><path d="M1.5 -1V2M0 0.5H3M10.5 -1V2M9 0.5H12M1.5 8V11M0 9.5H3M14.5 4V7M13 5.5H16M5.5 13V16M4 14.5H7M14.5 13V16M13 14.5H16" stroke="#8a8a8a" stroke-width="1"/></svg>
<div class="a" style="left:607px;top:141px;width:1px;height:19px;background:#8c8c8c;"></div>
<svg class="a" style="left:616px;top:142px" width="16" height="16" viewBox="0 0 16 16"><defs><linearGradient id="ggl" x1="0" y1="0" x2="0" y2="1"><stop offset="0" stop-color="#80e080"/><stop offset="1" stop-color="#38a838"/></linearGradient></defs><rect x="0.5" y="0.5" width="8" height="5" fill="url(#ggl)" stroke="#333"/><rect x="7.5" y="9.5" width="8" height="5" fill="url(#ggl)" stroke="#333"/><path d="M2 6.5L6.5 10.5M9.5 3L12.5 8.5" stroke="#333" stroke-width="1" stroke-dasharray="1 1"/></svg>
<svg class="a" style="left:640px;top:142px" width="16" height="16" viewBox="0 0 16 16"><defs><linearGradient id="ggl2" x1="0" y1="0" x2="0" y2="1"><stop offset="0" stop-color="#80e080"/><stop offset="1" stop-color="#38a838"/></linearGradient></defs><rect x="0.5" y="0.5" width="8" height="5" fill="url(#ggl2)" stroke="#333"/><rect x="9.5" y="7.5" width="5" height="7" fill="url(#ggl2)" stroke="#333"/><path d="M1.5 7C2.5 10 5 13 8 14.5" stroke="#333" stroke-width="1" stroke-dasharray="1 1" fill="none"/><path d="M10 3.5H13M11.5 2V5" stroke="#333" stroke-width="1"/></svg>
<svg class="a" style="left:216px;top:171px" width="16" height="16" viewBox="0 0 16 16"><rect x="1.5" y="1.5" width="11" height="11" fill="#fff" stroke="#222" stroke-width="1"/><path d="M12.5 2V12.5H2" stroke="#a0a0a0" fill="none"/><path d="M3.5 6.5L6 9.5L11 3.5" fill="none" stroke="#111" stroke-width="1.7"/></svg>
<svg class="a" style="left:240px;top:171px" width="16" height="16" viewBox="0 0 16 16"><circle cx="7.5" cy="7.5" r="5.5" fill="#fff" stroke="#555" stroke-width="1"/><path d="M2.5 7.5A5 5 0 0 1 12.5 7.5" fill="none" stroke="#111" stroke-width="1.5"/><circle cx="7.5" cy="7.5" r="2" fill="#111"/></svg>
<svg class="a" style="left:264px;top:172px" width="16" height="16" viewBox="0 0 16 16"><rect x="0" y="0" width="16" height="14" fill="#111"/><rect x="1" y="1" width="9" height="2" fill="#fff"/><rect x="1" y="4" width="9" height="9" fill="#fff"/><rect x="11" y="4" width="4" height="4" fill="#fff"/><rect x="11" y="9" width="4" height="4" fill="#fff"/><path d="M11.5 1L13 2.5L14.5 1Z" fill="#fff"/><path d="M2.5 6.5H6M2.5 8.5H8M2.5 10.5H7" stroke="#111" stroke-width="1"/><path d="M11.8 7L13 5.5L14.2 7Z" fill="#111"/><path d="M11.8 10L13 11.5L14.2 10Z" fill="#111"/></svg>
<svg class="a" style="left:288px;top:172px" width="16" height="16" viewBox="0 0 16 16"><rect x="1" y="3.5" width="13" height="7" fill="#c0c0c0" stroke="#6a6a6a" stroke-width="0.8"/><rect x="1" y="9" width="13" height="1.5" fill="#333"/><rect x="13" y="3.5" width="1.3" height="7" fill="#333"/></svg>
<svg class="a" style="left:312px;top:171px" width="16" height="16" viewBox="0 0 16 16"><text x="8" y="15" font-family="Liberation Serif" font-size="20" fill="#111" text-anchor="middle">A</text></svg>
<svg class="a" style="left:336px;top:171px" width="16" height="16" viewBox="0 0 16 16"><rect x="0.5" y="2.5" width="15" height="11" fill="#fff" stroke="#111"/><path d="M8 3V13" stroke="#111" stroke-width="1"/><path d="M2 6H6M2 8.5H6M2 11H6M9.5 6H14M9.5 8.5H14M9.5 11H14" stroke="#111" stroke-width="1"/></svg>
<svg class="a" style="left:360px;top:171px" width="16" height="16" viewBox="0 0 16 16"><rect x="4" y="1" width="8" height="6" fill="#dcdcdc"/><path d="M4.5 1V6.5H11.5V1" stroke="#222" fill="none"/><path d="M6 5L8 2.5L10 5Z" fill="#111"/><rect x="4" y="8" width="8" height="6.5" fill="#dcdcdc"/><path d="M4 14H12V8M4.5 8.5V14" stroke="#222" fill="none"/><path d="M6 10L8 12.5L10 10Z" fill="#111"/></svg>
<svg class="a" style="left:385px;top:171px" width="16" height="16" viewBox="0 0 16 16"><rect x="0" y="0" width="14" height="14" fill="#c4c4c4"/><path d="M0.5 14V0.5H13.5" stroke="#f4f4f4" fill="none"/><path d="M0 13.5H14.5V-1" stroke="#111" fill="none" stroke-width="1.2"/><path d="M4.5 5.5L7 2.5L9.5 5.5Z" fill="#111"/><path d="M3 7.5H11" stroke="#111"/><path d="M4.5 9.5L7 12.5L9.5 9.5Z" fill="#111"/></svg>
<svg class="a" style="left:408px;top:171px" width="16" height="16" viewBox="0 0 16 16"><text x="0" y="13" font-family="Liberation Sans" font-size="12" font-weight="bold" fill="#111" letter-spacing="-0.5">ab</text><rect x="14" y="2" width="1.3" height="12" fill="#111"/></svg>
<svg class="a" style="left:432px;top:171px" width="16" height="16" viewBox="0 0 16 16"><rect x="5" y="1.5" width="8" height="5.5" fill="#b8b8b8"/><path d="M12.5 1.5V7.5H4" stroke="#111" fill="none"/><rect x="3" y="8" width="10" height="6.5" fill="#b8b8b8"/><path d="M3.5 8V14.5" stroke="#111"/><path d="M4 8.5H12.5" stroke="#e0e0e0"/></svg>
<div class="a" style="left:454px;top:170px;width:1px;height:19px;background:#8c8c8c;"></div>
<svg class="a" style="left:464px;top:171px" width="16" height="16" viewBox="0 0 16 16"><rect x="2" y="2" width="2" height="12" fill="#7a7a7a"/><rect x="6.5" y="3.5" width="5" height="3" fill="#e4e4e4" stroke="#9a9a9a" stroke-width="1"/><rect x="6.5" y="7.5" width="8" height="3" fill="#e4e4e4" stroke="#9a9a9a" stroke-width="1"/><path d="M6 12.5H13" stroke="#7a7a7a" stroke-width="1"/><path d="M7.5 11L5.5 12.5L7.5 14" stroke="#7a7a7a" fill="none"/></svg>
<svg class="a" style="left:488px;top:171px" width="16" height="16" viewBox="0 0 16 16"><rect x="12" y="2" width="2" height="12" fill="#7a7a7a"/><rect x="5.5" y="3.5" width="5" height="3" fill="#e4e4e4" stroke="#9a9a9a" stroke-width="1"/><rect x="2.5" y="7.5" width="8" height="3" fill="#e4e4e4" stroke="#9a9a9a" stroke-width="1"/><path d="M4 12.5H11" stroke="#7a7a7a" stroke-width="1"/><path d="M9.5 11L11.5 12.5L9.5 14" stroke="#7a7a7a" fill="none"/></svg>
<svg class="a" style="left:512px;top:171px" width="16" height="16" viewBox="0 0 16 16"><rect x="2" y="2" width="12" height="2" fill="#7a7a7a"/><rect x="2.5" y="5.5" width="3" height="6" fill="#e4e4e4" stroke="#9a9a9a" stroke-width="1"/><rect x="7.5" y="5.5" width="3" height="9" fill="#e4e4e4" stroke="#9a9a9a" stroke-width="1"/><path d="M13.5 6V14" stroke="#7a7a7a" stroke-width="1"/><path d="M12 7L13.5 5L15 7" stroke="#7a7a7a" fill="none"/></svg>
<svg class="a" style="left:536px;top:171px" width="16" height="16" viewBox="0 0 16 16"><rect x="2" y="12" width="12" height="2" fill="#7a7a7a"/><rect x="2.5" y="4.5" width="3" height="6" fill="#e4e4e4" stroke="#9a9a9a" stroke-width="1"/><rect x="6.5" y="1.5" width="3" height="9" fill="#e4e4e4" stroke="#9a9a9a" stroke-width="1"/><path d="M12.5 2V10" stroke="#7a7a7a" stroke-width="1"/><path d="M11 9L12.5 11L14 9" stroke="#7a7a7a" fill="none"/></svg>
<svg class="a" style="left:560px;top:171px" width="16" height="16" viewBox="0 0 16 16"><rect x="7.5" y="2" width="1.5" height="12" fill="#7a7a7a"/><rect x="5.5" y="3.5" width="5" height="3" fill="#e4e4e4" stroke="#9a9a9a" stroke-width="1"/><rect x="3.5" y="8.5" width="9" height="3" fill="#e4e4e4" stroke="#9a9a9a" stroke-width="1"/></svg>
<svg class="a" style="left:584px;top:171px" width="16" height="16" viewBox="0 0 16 16"><rect x="2" y="7.5" width="12" height="1.5" fill="#7a7a7a"/><rect x="4.5" y="4.5" width="3" height="7" fill="#e4e4e4" stroke="#9a9a9a" stroke-width="1"/><rect x="8.5" y="2.5" width="3" height="11" fill="#e4e4e4" stroke="#9a9a9a" stroke-width="1"/></svg>
<div class="a" style="left:606px;top:170px;width:1px;height:19px;background:#8c8c8c;"></div>
<svg class="a" style="left:616px;top:171px" width="16" height="16" viewBox="0 0 16 16"><rect x="1.5" y="1.5" width="13" height="3" fill="#f0f0f0" stroke="#a8a8a8"/><path d="M1 9V14M15 9V14M2 11.5H14" stroke="#a8a8a8" stroke-width="0.8" stroke-dasharray="1 1"/><rect x="6.5" y="9.5" width="3" height="3" fill="#f0f0f0" stroke="#a8a8a8"/></svg>
<svg class="a" style="left:640px;top:171px" width="16" height="16" viewBox="0 0 16 16"><rect x="10.5" y="1.5" width="3" height="13" fill="#f0f0f0" stroke="#a8a8a8"/><path d="M2 1H7M2 15H7M4.5 2V14" stroke="#a8a8a8" stroke-width="0.8" stroke-dasharray="1 1"/><rect x="3.5" y="6.5" width="3" height="3" fill="#f0f0f0" stroke="#a8a8a8"/></svg>
<svg class="a" style="left:664px;top:171px" width="16" height="16" viewBox="0 0 16 16"><path d="M1.5 5V1.5H5M11 1.5H14.5V5M14.5 11V14.5H11M5 14.5H1.5V11" stroke="#909090" stroke-width="1" fill="none"/><rect x="5.5" y="5.5" width="5" height="5" fill="#f0f0f0" stroke="#909090"/><path d="M8 2V4M8 12V14M2 8H4M12 8H14" stroke="#909090" stroke-width="0.8"/></svg>
<div class="a" style="left:686px;top:170px;width:1px;height:19px;background:#8c8c8c;"></div>
<svg class="a" style="left:696px;top:171px" width="16" height="16" viewBox="0 0 16 16"><rect x="0.5" y="1.5" width="15" height="13" fill="#f4f4f4" stroke="#c0c0c0"/><path d="M8 2V14" stroke="#a8a8a8"/><rect x="5.5" y="4.5" width="5" height="7" fill="#e0e0e0" stroke="#a8a8a8"/><path d="M2 8H5M11 8H14" stroke="#a8a8a8" stroke-width="0.8"/></svg>
<svg class="a" style="left:720px;top:171px" width="16" height="16" viewBox="0 0 16 16"><rect x="0.5" y="1.5" width="15" height="13" fill="#f4f4f4" stroke="#c0c0c0"/><path d="M1 8H15" stroke="#a8a8a8"/><rect x="4.5" y="5.5" width="7" height="5" fill="#e0e0e0" stroke="#a8a8a8"/><path d="M8 2V5M8 11V14" stroke="#a8a8a8" stroke-width="0.8"/></svg>
<div class="a" style="left:742px;top:170px;width:1px;height:19px;background:#8c8c8c;"></div>
<svg class="a" style="left:752px;top:171px" width="16" height="16" viewBox="0 0 16 16"><path d="M1 2V14M15 2V14M3 8H13M3 8L5 6M3 8L5 10M13 8L11 6M13 8L11 10" stroke="#a8a8a8" stroke-width="1.1" fill="none"/></svg>
<svg class="a" style="left:776px;top:171px" width="16" height="16" viewBox="0 0 16 16"><path d="M2 1H14M2 15H14M8 3V13M8 3L6 5M8 3L10 5M8 13L6 11M8 13L10 11" stroke="#a8a8a8" stroke-width="1.1" fill="none"/><rect x="2" y="0" width="12" height="2" fill="#d0d0d0"/><rect x="2" y="14" width="12" height="2" fill="#d0d0d0"/></svg>
<svg class="a" style="left:215px;top:200px" width="16" height="16" viewBox="0 0 16 16"><path d="M8 1V15M1 8H15" stroke="#909090" stroke-width="1" stroke-dasharray="1 1"/><path d="M3.5 5.5L1 8L3.5 10.5M12.5 5.5L15 8L12.5 10.5M5.5 3.5L8 1L10.5 3.5" stroke="#8a8a8a" stroke-width="1.1" fill="none"/></svg>
<svg class="a" style="left:240px;top:200px" width="16" height="16" viewBox="0 0 16 16"><path d="M1 8H15" stroke="#909090" stroke-width="1" stroke-dasharray="1 1"/><path d="M7 2.5C10 3 11 6 10 9C9.5 11 8.5 12 7 13" stroke="#8a8a8a" stroke-width="1" fill="none"/><path d="M9 1L6.5 2.5L8.5 4.5M9 14.5L6.5 13L8.5 11" stroke="#8a8a8a" stroke-width="1" fill="none"/></svg>
<div class="a" style="left:262px;top:199px;width:1px;height:19px;background:#8c8c8c;"></div>
<svg class="a" style="left:272px;top:200px" width="16" height="16" viewBox="0 0 16 16"><rect x="2" y="1" width="1" height="1" fill="#2a3a70"/><rect x="2" y="4" width="1" height="1" fill="#2a3a70"/><rect x="2" y="7" width="1" height="1" fill="#2a3a70"/><rect x="2" y="10" width="1" height="1" fill="#2a3a70"/><rect x="2" y="13" width="1" height="1" fill="#2a3a70"/><rect x="5" y="1" width="1" height="1" fill="#2a3a70"/><rect x="5" y="4" width="1" height="1" fill="#2a3a70"/><rect x="5" y="7" width="1" height="1" fill="#2a3a70"/><rect x="5" y="10" width="1" height="1" fill="#2a3a70"/><rect x="5" y="13" width="1" height="1" fill="#2a3a70"/><rect x="8" y="1" width="1" height="1" fill="#2a3a70"/><rect x="8" y="4" width="1" height="1" fill="#2a3a70"/><rect x="8" y="7" width="1" height="1" fill="#2a3a70"/><rect x="8" y="10" width="1" height="1" fill="#2a3a70"/><rect x="8" y="13" width="1" height="1" fill="#2a3a70"/><rect x="11" y="1" width="1" height="1" fill="#2a3a70"/><rect x="11" y="4" width="1" height="1" fill="#2a3a70"/><rect x="11" y="7" width="1" height="1" fill="#2a3a70"/><rect x="11" y="10" width="1" height="1" fill="#2a3a70"/><rect x="11" y="13" width="1" height="1" fill="#2a3a70"/><rect x="14" y="1" width="1" height="1" fill="#2a3a70"/><rect x="14" y="4" width="1" height="1" fill="#2a3a70"/><rect x="14" y="7" width="1" height="1" fill="#2a3a70"/><rect x="14" y="10" width="1" height="1" fill="#2a3a70"/><rect x="14" y="13" width="1" height="1" fill="#2a3a70"/></svg>
<svg class="a" style="left:295px;top:208px" width="5" height="3" viewBox="0 0 5 3"><path d="M0 0H5L2.5 3Z" fill="#1a1a1a"/></svg>
<div class="a" style="left:307px;top:199px;width:1px;height:19px;background:#8c8c8c;"></div>
<svg class="a" style="left:318px;top:200px" width="16" height="16" viewBox="0 0 16 16"><path d="M1.5 7L6.5 2L11.5 7L6.5 12Z" fill="#fff" stroke="#2a4a9a" stroke-width="1.1"/><path d="M3 7.5H10L6.5 11Z" fill="#8ab8f0"/><path d="M6.5 0.5V6" stroke="#111"/><path d="M11.5 6C14 6 15 8 15 11L13.5 11C13.5 9 12.5 8 11.5 8Z" fill="#2a6ad8"/><rect x="0" y="12" width="16" height="5" fill="#000"/></svg>
<svg class="a" style="left:340px;top:208px" width="5" height="3" viewBox="0 0 5 3"><path d="M0 0H5L2.5 3Z" fill="#1a1a1a"/></svg>
<svg class="a" style="left:355px;top:200px" width="16" height="16" viewBox="0 0 16 16"><path d="M10.5 0.5L15 3.5L10 8L8 6Z" fill="#4a4aa8" stroke="#2a2a7a" stroke-width="0.6"/><path d="M8 6L10 8L7 11.5H1.5L3.5 7.5Z" fill="#f0d878" stroke="#8a7020" stroke-width="0.7"/><rect x="0" y="12" width="16" height="5" fill="#000"/></svg>
<svg class="a" style="left:377px;top:208px" width="5" height="3" viewBox="0 0 5 3"><path d="M0 0H5L2.5 3Z" fill="#1a1a1a"/></svg>
<svg class="a" style="left:392px;top:200px" width="16" height="16" viewBox="0 0 16 16"><path d="M5 8.5L12 1L14 2.5L7 10Z" fill="#d8d8d8" stroke="#b0b0b0" stroke-width="0.8"/><path d="M1 10.5H12" stroke="#a0a0a0" stroke-width="1"/><rect x="0" y="12" width="16" height="5" fill="#b4b4b4"/></svg>
<svg class="a" style="left:414px;top:208px" width="5" height="3" viewBox="0 0 5 3"><path d="M0 0H5L2.5 3Z" fill="#a0a0a0"/></svg>
<svg class="a" style="left:429px;top:200px" width="16" height="16" viewBox="0 0 16 16"><path d="M1 3.5H16" stroke="#6a6a6a"/><path d="M1 6.5H16" stroke="#6a6a6a" stroke-dasharray="1 1"/><path d="M1 9.5H16" stroke="#6a6a6a" stroke-dasharray="3 1"/><path d="M1 12.5H16" stroke="#6a6a6a" stroke-dasharray="1 2 2 2"/></svg>
<svg class="a" style="left:451px;top:208px" width="5" height="3" viewBox="0 0 5 3"><path d="M0 0H5L2.5 3Z" fill="#a0a0a0"/></svg>
<svg class="a" style="left:467px;top:200px" width="16" height="16" viewBox="0 0 16 16"><rect x="0" y="3" width="15" height="1" fill="#707070"/><rect x="0" y="6" width="15" height="2" fill="#707070"/><rect x="0" y="9.5" width="15" height="3" fill="#707070"/></svg>
<svg class="a" style="left:488px;top:208px" width="5" height="3" viewBox="0 0 5 3"><path d="M0 0H5L2.5 3Z" fill="#a0a0a0"/></svg>
<svg class="a" style="left:502px;top:200px" width="16" height="16" viewBox="0 0 16 16"><path d="M1.5 7L6.5 2L11.5 7L6.5 12Z" fill="#fff" stroke="#2a4a9a" stroke-width="1.1"/><path d="M3 7.5H10L6.5 11Z" fill="#8ab8f0"/><path d="M6.5 0.5V6" stroke="#111"/><path d="M11.5 6C14 6 15 8 15 11L13.5 11C13.5 9 12.5 8 11.5 8Z" fill="#2a6ad8"/><path d="M7 14.5H8.5M10 14.5H11.5M13 14.5H14.5" stroke="#111" stroke-width="2"/></svg>
<div class="a" style="left:524px;top:199px;width:1px;height:19px;background:#8c8c8c;"></div>
<svg class="a" style="left:533px;top:200px" width="16" height="16" viewBox="0 0 16 16"><rect x="1" y="1" width="7" height="7" fill="#a0a0a0"/><rect x="8" y="8" width="7" height="7" fill="#a0a0a0"/><path d="M2 15L15 2" stroke="#a8a8a8" stroke-width="1.2"/></svg>
<div class="a" style="left:556px;top:199px;width:1px;height:19px;background:#8c8c8c;"></div>
<svg class="a" style="left:565px;top:200px" width="16" height="16" viewBox="0 0 16 16"><rect x="4.5" y="2" width="8" height="9" fill="#c8c8c8"/><rect x="1" y="5" width="9" height="9" fill="#8c8c8c"/><path d="M14.5 3V10" stroke="#888" stroke-width="1" stroke-dasharray="1 1"/><path d="M13 3.5L14.5 1.5L16 3.5" stroke="#777" stroke-width="1" fill="none"/></svg>
<svg class="a" style="left:590px;top:200px" width="16" height="16" viewBox="0 0 16 16"><rect x="3" y="4" width="9" height="9" fill="#c8c8c8"/><rect x="0" y="1" width="9" height="9" fill="#8c8c8c"/><path d="M13.5 5V12" stroke="#888" stroke-width="1" stroke-dasharray="1 1"/><path d="M12 11.5L13.5 13.5L15 11.5" stroke="#777" stroke-width="1" fill="none"/></svg>
<svg class="a" style="left:613px;top:200px" width="16" height="16" viewBox="0 0 16 16"><rect x="3" y="4" width="9" height="8" fill="#c8c8c8"/><rect x="6" y="1" width="9" height="9" fill="#8c8c8c"/><path d="M4 13.5H11" stroke="#888" stroke-width="1" stroke-dasharray="1 1"/><path d="M4 12L2 13.5L4 15" stroke="#777" stroke-width="1" fill="none"/></svg>
<svg class="a" style="left:637px;top:200px" width="16" height="16" viewBox="0 0 16 16"><rect x="5" y="4" width="9" height="8" fill="#c8c8c8"/><rect x="2" y="1" width="9" height="9" fill="#8c8c8c"/><path d="M6 13.5H13" stroke="#888" stroke-width="1" stroke-dasharray="1 1"/><path d="M13 12L15 13.5L13 15" stroke="#777" stroke-width="1" fill="none"/></svg>
<div class="a" style="left:660px;top:199px;width:1px;height:19px;background:#8c8c8c;"></div>
<svg class="a" style="left:671px;top:200px" width="16" height="16" viewBox="0 0 16 16"><rect x="5" y="4" width="10" height="9" fill="#c8c8c8"/><rect x="2" y="1" width="9" height="9" fill="#8c8c8c"/><rect x="0" y="12" width="16" height="5" fill="#b0b0b0"/></svg>
<svg class="a" style="left:693px;top:208px" width="5" height="3" viewBox="0 0 5 3"><path d="M0 0H5L2.5 3Z" fill="#a0a0a0"/></svg>
<svg class="a" style="left:387px;top:228px" width="16" height="16" viewBox="0 0 16 16"><text x="6.5" y="11.5" font-family="Liberation Serif" font-size="15" font-weight="bold" fill="#a8a8a8" text-anchor="middle">A</text><rect x="0" y="13" width="16" height="5" fill="#b8b8b8"/></svg>
<svg class="a" style="left:409px;top:236px" width="5" height="3" viewBox="0 0 5 3"><path d="M0 0H5L2.5 3Z" fill="#a0a0a0"/></svg>
<div class="a" style="left:421px;top:227px;width:1px;height:19px;background:#8c8c8c;"></div>
<svg class="a" style="left:431px;top:228px" width="16" height="16" viewBox="0 0 16 16"><text x="8" y="12" font-family="Liberation Serif" font-size="12" font-weight="bold" fill="#8a8a8a" text-anchor="middle">B</text></svg>
<svg class="a" style="left:454px;top:228px" width="16" height="16" viewBox="0 0 16 16"><text x="8" y="12" font-family="Liberation Serif" font-size="13" font-weight="bold" font-style="italic" fill="#8a8a8a" text-anchor="middle">I</text></svg>
<svg class="a" style="left:479px;top:228px" width="16" height="16" viewBox="0 0 16 16"><text x="8" y="11" font-family="Liberation Serif" font-size="11" font-weight="bold" fill="#8a8a8a" text-anchor="middle">U</text><rect x="3" y="13" width="10" height="1" fill="#8a8a8a"/></svg>
<div class="a" style="left:501px;top:227px;width:1px;height:19px;background:#8c8c8c;"></div>
<svg class="a" style="left:512px;top:228px" width="16" height="16" viewBox="0 0 16 16"><rect x="1" y="2.5" width="14" height="1" fill="#606060"/><rect x="1" y="4.7" width="9" height="1" fill="#606060"/><rect x="1" y="6.9" width="14" height="1" fill="#606060"/><rect x="1" y="9.1" width="9" height="1" fill="#606060"/><rect x="1" y="11.3" width="14" height="1" fill="#606060"/><rect x="1" y="13.5" width="9" height="1" fill="#606060"/></svg>
<svg class="a" style="left:536px;top:228px" width="16" height="16" viewBox="0 0 16 16"><rect x="1.0" y="2.5" width="14" height="1" fill="#606060"/><rect x="3.5" y="4.7" width="9" height="1" fill="#606060"/><rect x="1.0" y="6.9" width="14" height="1" fill="#606060"/><rect x="3.5" y="9.1" width="9" height="1" fill="#606060"/><rect x="1.0" y="11.3" width="14" height="1" fill="#606060"/><rect x="3.5" y="13.5" width="9" height="1" fill="#606060"/></svg>
<svg class="a" style="left:560px;top:228px" width="16" height="16" viewBox="0 0 16 16"><rect x="1" y="2.5" width="14" height="1" fill="#606060"/><rect x="6" y="4.7" width="9" height="1" fill="#606060"/><rect x="1" y="6.9" width="14" height="1" fill="#606060"/><rect x="6" y="9.1" width="9" height="1" fill="#606060"/><rect x="1" y="11.3" width="14" height="1" fill="#606060"/><rect x="6" y="13.5" width="9" height="1" fill="#606060"/></svg>
<div class="a" style="left:581px;top:227px;width:1px;height:19px;background:#8c8c8c;"></div>
<svg class="a" style="left:591px;top:228px" width="16" height="16" viewBox="0 0 16 16"><rect x="1.5" y="1.5" width="12" height="12" fill="#f0f0f0" stroke="#a8a8a8"/><rect x="2" y="2" width="11" height="2" fill="#c8c8c8"/><path d="M10 7L15 11L10 15Z" fill="#b0b0b0"/></svg>
<div class="a" style="left:214px;top:226px;width:117px;height:22px;background:#f0f0f0;border:1px solid #adadad"></div>
<div class="a" style="left:316px;top:227px;width:14px;height:20px;background:#f5f5f5;"></div>
<svg class="a" style="left:318px;top:233px" width="10" height="6" viewBox="0 0 10 6"><path d="M1 1L5 5L9 1" fill="none" stroke="#8a8a8a" stroke-width="1"/></svg>
<div class="a" style="left:334px;top:226px;width:46px;height:22px;background:#f0f0f0;border:1px solid #adadad"></div>
<div class="a" style="left:365px;top:227px;width:14px;height:20px;background:#f5f5f5;"></div>
<svg class="a" style="left:367px;top:233px" width="10" height="6" viewBox="0 0 10 6"><path d="M1 1L5 5L9 1" fill="none" stroke="#8a8a8a" stroke-width="1"/></svg>
<div class="a" style="left:210px;top:250px;width:589px;height:297px;background:#f0f0f0;"></div>
<div class="a" style="left:210px;top:250px;width:589px;height:2px;background:#6a6a6a;"></div>
<div class="a" style="left:210px;top:250px;width:2px;height:297px;background:#6a6a6a;"></div>
<div class="a" style="left:212px;top:252px;width:569px;height:13px;background:#808080;"></div>
<div class="a" style="left:212px;top:265px;width:569px;height:1px;background:#9a9a9a;"></div>
<div class="a" style="left:212px;top:266px;width:569px;height:1px;background:#6a6a6a;"></div>
<div class="a" style="left:212px;top:476px;width:569px;height:1px;background:#e2e2e2;"></div>
<div class="a" style="left:212px;top:477px;width:569px;height:1px;background:#ffffff;"></div>
<div class="a" style="left:212px;top:478px;width:569px;height:34px;background:#808080;"></div>
<div class="a" style="left:781px;top:252px;width:1px;height:260px;background:#ffffff;"></div>
<div class="a" style="left:798px;top:252px;width:1px;height:277px;background:#e6e6e6;"></div>
<div class="a" style="left:789px;top:360px;width:2px;height:56px;background:#858585;border-radius:1px"></div>
<div class="a" style="left:314px;top:520px;width:53px;height:2px;background:#858585;border-radius:1px"></div>
<div class="a" style="left:212px;top:529px;width:586px;height:1px;background:#5a5a5a;"></div>
<div class="a" style="left:208px;top:546px;width:591px;height:5px;background:#f0f0f0;"></div>
<div class="a" style="left:212px;top:545px;width:587px;height:1px;background:#dadada;"></div>
<svg class="a" style="left:216px;top:535px" width="7" height="7" viewBox="0 0 7 7"><rect x="0" y="0" width="1.2" height="7" fill="#3a3a3a"/><path d="M6 0L1.5 3.5L6 7Z" fill="#3a3a3a"/></svg>
<svg class="a" style="left:235px;top:535px" width="4" height="7" viewBox="0 0 4 7"><path d="M4 0L0 3.5L4 7Z" fill="#3a3a3a"/></svg>
<svg class="a" style="left:254px;top:535px" width="4" height="7" viewBox="0 0 4 7"><path d="M0 0L4 3.5L0 7Z" fill="#3a3a3a"/></svg>
<svg class="a" style="left:270px;top:535px" width="8" height="7" viewBox="0 0 8 7"><path d="M0 0L4.5 3.5L0 7Z" fill="#3a3a3a"/><rect x="6" y="0" width="1.2" height="7" fill="#3a3a3a"/></svg>
<svg class="a" style="left:280px;top:525px" width="130" height="25" viewBox="0 0 130 25"><path d="M6 4.5H65" stroke="#fff" stroke-width="1"/><path d="M65 4.5L117 4.5L108.5 20.5H65.7L60 13Z" fill="#f0f0f0" stroke="#1a1a1a" stroke-width="1"/><path d="M117 4.5H130" stroke="#5a5a5a" stroke-width="1"/><path d="M5.5 4.5L15 20.5H57.5L65 4.5" fill="#ffffff" stroke="#1a1a1a" stroke-width="1"/><path d="M0 4.5H5.5" stroke="#5a5a5a" stroke-width="1"/></svg>
<div class="t" style="left:296.5px;top:532px;font-weight:bold;letter-spacing:-0.15px">Design</div>
<div class="t" style="left:350px;top:532px;letter-spacing:-0.35px">Scripts</div>
<div class="a" style="left:0px;top:551px;width:804px;height:23px;background:#f0f0f0;"></div>
<div class="a" style="left:0px;top:551px;width:804px;height:1px;background:#dcdcdc;"></div>
<div class="tr" style="left:5px;top:558px;letter-spacing:-0.15px">For Help, press F1</div>
<svg class="a" style="left:496px;top:555px" width="10" height="15" viewBox="0 0 10 15"><path d="M0.5 0.5V12L3.5 9.5L6 14.5L8 13.5L5.5 8.8H9.5Z" fill="#111" stroke="#111" stroke-width="0.6"/></svg>
<div class="tr" style="left:513px;top:558px;letter-spacing:-0.1px">12330, 318</div>
<div class="a" style="left:634px;top:553px;width:1px;height:19px;background:#d0d0d0;"></div>
<svg class="a" style="left:639px;top:556px" width="14" height="14" viewBox="0 0 14 14"><rect x="5.5" y="4.5" width="8" height="8" rx="1.5" fill="#b8b8b8"/><path d="M5.5 4.5H13.5V12.5H5.5Z" fill="none" stroke="#333" stroke-width="0.9" stroke-dasharray="0.9 1.1"/><path d="M1 4.5H4M7 4.5H10M5.5 0V3M5.5 6V9" stroke="#1a50ff" stroke-width="1.1"/></svg>
<div class="tr" style="left:658px;top:558px;letter-spacing:-0.1px">0, 0</div>
<div class="a" style="left:781px;top:553px;width:1px;height:19px;background:#d0d0d0;"></div>
<div class="a" style="left:784px;top:553px;width:1px;height:19px;background:#d0d0d0;"></div>
<svg class="a" style="left:786px;top:556px" width="14" height="14" viewBox="0 0 14 14"><rect x="5.5" y="5.5" width="8" height="8" rx="1.5" fill="#b8b8b8"/><path d="M5.5 5.5H13.5V13.5H5.5Z" fill="none" stroke="#333" stroke-width="0.9" stroke-dasharray="0.9 1.1"/><path d="M5.5 0V3M13.5 0V3M7 1.5H12" stroke="#333" stroke-width="1"/><path d="M7 1.5H11.5" stroke="#1a50ff" stroke-width="1.2"/><path d="M10.5 0L12.8 1.5L10.5 3Z" fill="#1a50ff"/><path d="M0 5.5H3.5M0 13.5H3.5" stroke="#333" stroke-width="1"/><path d="M1.7 6.5V11" stroke="#1a50ff" stroke-width="1.2"/><path d="M0.2 10L1.7 12.5L3.2 10Z" fill="#1a50ff"/></svg>
<div class="a" style="left:0;top:0;width:804px;height:574px;border:1px solid #9a9a9a;border-radius:8px 8px 6px 6px;pointer-events:none"></div>
</div></body></html>
